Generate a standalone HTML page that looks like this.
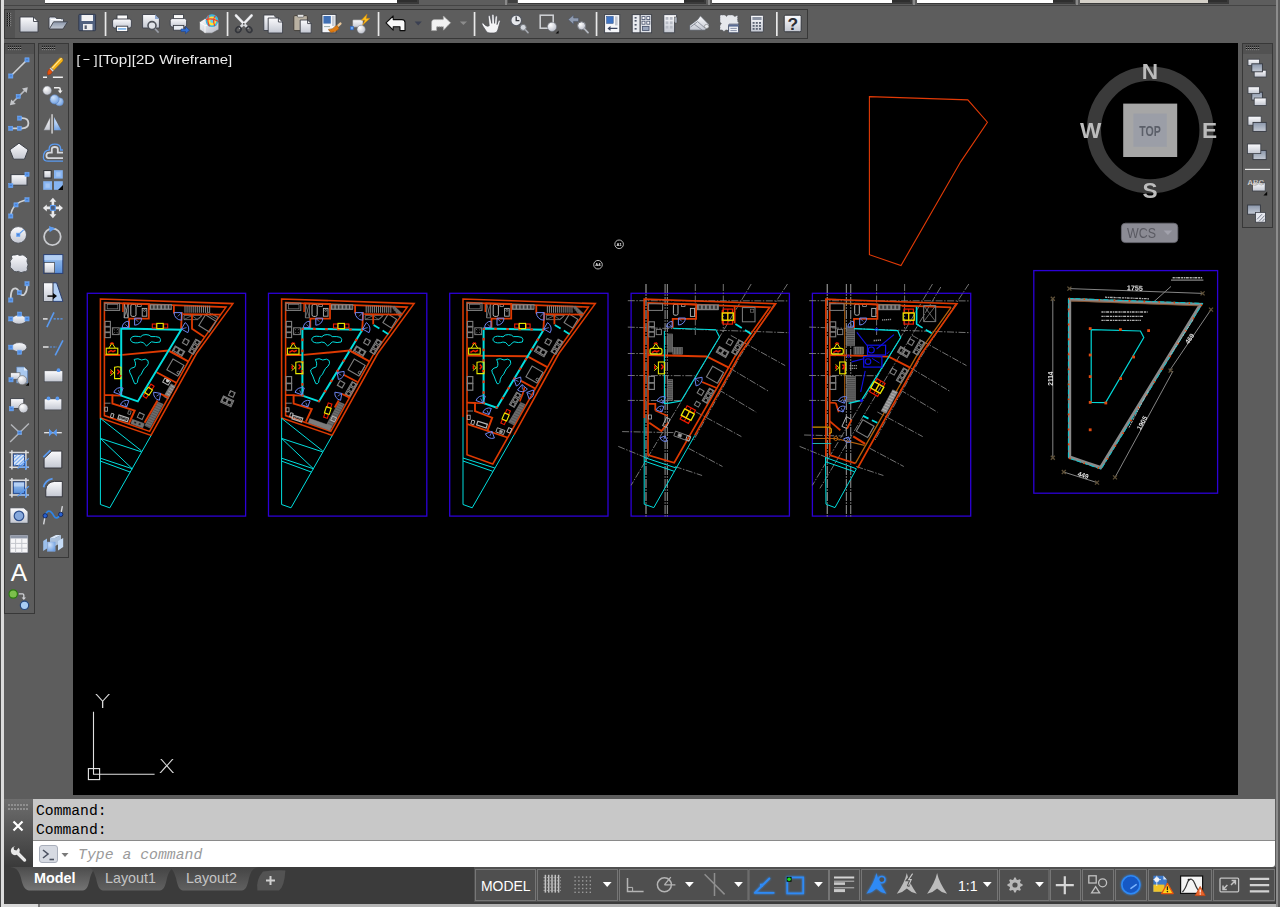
<!DOCTYPE html><html><head><meta charset="utf-8"><title>Drawing</title><style>
*{box-sizing:border-box;margin:0;padding:0}
html,body{width:1280px;height:907px;overflow:hidden;background:#5d5d5d;font-family:"Liberation Sans",sans-serif}
#root{position:relative;width:1280px;height:907px;overflow:hidden;background:#5d5d5d}
.abs{position:absolute}
.tb{position:absolute;border:1px solid #383838;background:#5d5d5d}
.grip{position:absolute;background:#525252}
svg{position:absolute;overflow:visible}
.mono{font-family:"Liberation Mono",monospace}
</style></head><body><div id="root">
<div class="abs" style="left:0;top:0;width:1px;height:907px;background:#4c4c4c"></div>
<div class="abs" style="left:1px;top:0;width:3px;height:907px;background:#dcdcdc"></div>
<div class="abs" style="left:1276px;top:0;width:2px;height:907px;background:#8c8c8c"></div>
<div class="abs" style="left:4px;top:5px;width:1272px;height:1px;background:#444"></div>
<div class="abs" style="left:45px;top:0;width:374px;height:4px;background:#3a3a3a"></div>
<div class="abs" style="left:45px;top:0;width:352px;height:3px;background:#fff"></div>
<div class="abs" style="left:397px;top:0;width:20px;height:2px;background:#2e2e2e"></div>
<div class="abs" style="left:518px;top:0;width:188px;height:4px;background:#3a3a3a"></div>
<div class="abs" style="left:518px;top:0;width:166px;height:3px;background:#fff"></div>
<div class="abs" style="left:684px;top:0;width:20px;height:2px;background:#2e2e2e"></div>
<div class="abs" style="left:712px;top:0;width:200px;height:4px;background:#3a3a3a"></div>
<div class="abs" style="left:712px;top:0;width:180px;height:3px;background:#fff"></div>
<div class="abs" style="left:892px;top:0;width:18px;height:2px;background:#2e2e2e"></div>
<div class="abs" style="left:917px;top:0;width:158px;height:4px;background:#3a3a3a"></div>
<div class="abs" style="left:917px;top:0;width:136px;height:3px;background:#fff"></div>
<div class="abs" style="left:1053px;top:0;width:20px;height:2px;background:#2e2e2e"></div>
<div class="abs" style="left:1080px;top:0;width:149px;height:4px;background:#3a3a3a"></div>
<div class="abs" style="left:1080px;top:0;width:128px;height:3px;background:#d4d0c8"></div>
<div class="abs" style="left:1208px;top:0;width:19px;height:2px;background:#2e2e2e"></div>
<div class="abs" style="left:505px;top:0;width:2px;height:5px;background:#8a8a8a"></div>
<div class="abs" style="left:508px;top:0;width:9px;height:3px;background:#404040"></div>
<div class="abs" style="left:708px;top:0;width:2px;height:5px;background:#8a8a8a"></div>
<div class="abs" style="left:913px;top:0;width:2px;height:5px;background:#8a8a8a"></div>
<div class="abs" style="left:1076px;top:0;width:2px;height:5px;background:#8a8a8a"></div>
<div class="tb" style="left:4px;top:9px;width:804px;height:30px"></div>
<div class="grip" style="left:5px;top:10px;width:10px;height:28px"></div>
<svg style="left:0;top:0" width="1280" height="43" viewBox="0 0 1280 43"><defs>
<linearGradient id="gw" x1="0" y1="0" x2="0" y2="1"><stop offset="0" stop-color="#fbfbfd"/><stop offset="1" stop-color="#c4c8d2"/></linearGradient>
<linearGradient id="gw2" x1="0" y1="0" x2="1" y2="1"><stop offset="0" stop-color="#ffffff"/><stop offset="1" stop-color="#b4b8c4"/></linearGradient>
<linearGradient id="gb" x1="0" y1="0" x2="0" y2="1"><stop offset="0" stop-color="#9ec4f0"/><stop offset="1" stop-color="#5a8fd8"/></linearGradient>
<linearGradient id="gg" x1="0" y1="0" x2="0" y2="1"><stop offset="0" stop-color="#e4e6ea"/><stop offset="1" stop-color="#8e949e"/></linearGradient>
<linearGradient id="gs" x1="0" y1="0" x2="0" y2="1"><stop offset="0" stop-color="#8a96aa"/><stop offset="1" stop-color="#c4cad4"/></linearGradient>
<radialGradient id="gsp" cx="0.35" cy="0.3" r="0.8"><stop offset="0" stop-color="#ffffff"/><stop offset="1" stop-color="#b8bcc8"/></radialGradient>
<radialGradient id="gbl" cx="0.35" cy="0.3" r="0.8"><stop offset="0" stop-color="#cfe2fa"/><stop offset="1" stop-color="#6a9ce0"/></radialGradient>
</defs><rect x="6.9" y="12.90" width="1" height="1.1" fill="#0c0c0c"/><rect x="7.95" y="12.90" width="1" height="1.1" fill="#8a8a8a"/><rect x="9.1" y="12.90" width="1" height="1.1" fill="#0c0c0c"/><rect x="10.15" y="12.90" width="1" height="1.1" fill="#8a8a8a"/><rect x="6.9" y="14.93" width="1" height="1.1" fill="#0c0c0c"/><rect x="7.95" y="14.93" width="1" height="1.1" fill="#8a8a8a"/><rect x="9.1" y="14.93" width="1" height="1.1" fill="#0c0c0c"/><rect x="10.15" y="14.93" width="1" height="1.1" fill="#8a8a8a"/><rect x="6.9" y="16.96" width="1" height="1.1" fill="#0c0c0c"/><rect x="7.95" y="16.96" width="1" height="1.1" fill="#8a8a8a"/><rect x="9.1" y="16.96" width="1" height="1.1" fill="#0c0c0c"/><rect x="10.15" y="16.96" width="1" height="1.1" fill="#8a8a8a"/><rect x="6.9" y="18.99" width="1" height="1.1" fill="#0c0c0c"/><rect x="7.95" y="18.99" width="1" height="1.1" fill="#8a8a8a"/><rect x="9.1" y="18.99" width="1" height="1.1" fill="#0c0c0c"/><rect x="10.15" y="18.99" width="1" height="1.1" fill="#8a8a8a"/><rect x="6.9" y="21.02" width="1" height="1.1" fill="#0c0c0c"/><rect x="7.95" y="21.02" width="1" height="1.1" fill="#8a8a8a"/><rect x="9.1" y="21.02" width="1" height="1.1" fill="#0c0c0c"/><rect x="10.15" y="21.02" width="1" height="1.1" fill="#8a8a8a"/><rect x="6.9" y="23.05" width="1" height="1.1" fill="#0c0c0c"/><rect x="7.95" y="23.05" width="1" height="1.1" fill="#8a8a8a"/><rect x="9.1" y="23.05" width="1" height="1.1" fill="#0c0c0c"/><rect x="10.15" y="23.05" width="1" height="1.1" fill="#8a8a8a"/><rect x="6.9" y="25.08" width="1" height="1.1" fill="#0c0c0c"/><rect x="7.95" y="25.08" width="1" height="1.1" fill="#8a8a8a"/><rect x="9.1" y="25.08" width="1" height="1.1" fill="#0c0c0c"/><rect x="10.15" y="25.08" width="1" height="1.1" fill="#8a8a8a"/><path d="M20 17H33.5L38 21.5V32H20Z" fill="url(#gw)" stroke="#3c4048" stroke-width="0.9"/><path d="M33.5 17V21.5H38Z" fill="#fff" stroke="#3c4048" stroke-width="0.9"/><path d="M49 29V18.3q0-1.3 1.3-1.3h5l1.6 1.8h5.6q1 0 1 1v2" fill="#e2e6ee" stroke="#3c4048" stroke-width="0.9"/><path d="M49.3 29L53.6 21.8H67.6L63 29Z" fill="url(#gs)" stroke="#3c4048" stroke-width="0.9"/><path d="M51 19.5h10" stroke="#fff" stroke-width="1"/><rect x="78.8" y="14.3" width="16.8" height="16.4" rx="1" fill="#50607e" stroke="#2e3648" stroke-width="0.9"/><rect x="81.5" y="15" width="11.5" height="6" fill="#f2f2f4"/><rect x="83" y="24" width="9.5" height="6.2" fill="#ececee"/><rect x="84.6" y="25.4" width="2.2" height="3.6" fill="#555e70"/><rect x="104.7" y="12" width="1.7" height="24" fill="#e9e9e9"/><rect x="117" y="15" width="10.5" height="5" fill="#fafafa" stroke="#3c4048" stroke-width="0.9"/><rect x="112.6" y="19" width="18.8" height="9" rx="2" fill="url(#gw)" stroke="#3c4048" stroke-width="0.9"/><rect x="116.5" y="26.2" width="11.2" height="5.4" fill="#fdfdfd" stroke="#3c4048" stroke-width="0.9"/><rect x="118" y="28" width="8.2" height="1.8" fill="#86b8ea"/><path d="M142.6 14.5H155L159.4 19V28H142.6Z" fill="url(#gw)" stroke="#3c4048" stroke-width="0.9"/><path d="M155 14.5V19H159.4Z" fill="#8fa8d0"/><circle cx="152" cy="25.6" r="4" fill="#dfe2e8" stroke="#50545c" stroke-width="1.6"/><path d="M155 28.8L158.6 32.6" stroke="#9a9ea8" stroke-width="1.6"/><rect x="173.5" y="14.6" width="10" height="5" fill="#fafafa" stroke="#3c4048" stroke-width="0.9"/><rect x="170.2" y="18.6" width="16.4" height="8.4" rx="2" fill="url(#gw)" stroke="#3c4048" stroke-width="0.9"/><rect x="173.4" y="25.4" width="10.4" height="4.8" fill="#e8ecf2" stroke="#3c4048" stroke-width="0.9"/><path d="M181 29h4.5v-2.4l4 3.6l-4 3.6v-2.4H181Z" fill="#2f6fd6" stroke="#1c3f8a" stroke-width="0.6"/><path d="M199.6 22L205 18.5H214L218.8 22.5V29.5L212 33.2H205L199.6 29.5Z" fill="url(#gw2)" stroke="#555" stroke-width="0.6"/><path d="M205 25.5V33M205 25.5L199.8 22.3M205 25.5H215" stroke="#fff" stroke-width="0.8" fill="none"/><circle cx="212" cy="20.6" r="6.4" fill="#3fb6e0"/><circle cx="212" cy="21" r="4.4" fill="#ffe23a"/><circle cx="212.4" cy="20.8" r="2.2" fill="#5fd0f0"/><path d="M208.4 15.4Q207 21 209.4 26.2M206 19.6Q212 17.6 218 21.2M215.6 15.6Q212 19 214.8 26" stroke="#f0402a" stroke-width="1.1" fill="none"/><rect x="226.7" y="12" width="1.7" height="24" fill="#e9e9e9"/><path d="M236 15.5L247.6 27.6M251.6 15.5L240 27.6" stroke="#d8dade" stroke-width="2.6" stroke-linecap="round"/><path d="M236 15.5L243.8 23.8M251.6 15.5L243.8 23.8" stroke="#f4f4f6" stroke-width="1.4" stroke-linecap="round"/><ellipse cx="238.4" cy="29.6" rx="2.4" ry="3" transform="rotate(40 238.4 29.6)" fill="none" stroke="#34363c" stroke-width="1.6"/><ellipse cx="249.2" cy="29.6" rx="2.4" ry="3" transform="rotate(-40 249.2 29.6)" fill="none" stroke="#34363c" stroke-width="1.6"/><circle cx="243.8" cy="23.8" r="0.9" fill="#444"/><path d="M263.8 15H273.5L277.6 19V30.5H263.8Z" fill="url(#gw)" stroke="#3c4048" stroke-width="0.9"/><path d="M268.2 18H278.4L282.6 22V33H268.2Z" fill="url(#gw)" stroke="#3c4048" stroke-width="0.9"/><path d="M278.4 18V22H282.6Z" fill="#fff" stroke="#3c4048" stroke-width="0.9"/><rect x="293.8" y="15.6" width="13.6" height="15" rx="1.2" fill="#b9b1a2" stroke="#3e3a34" stroke-width="0.9"/><rect x="297.4" y="14.4" width="6.4" height="2.8" rx="1" fill="#e6e6e6" stroke="#444" stroke-width="0.6"/><path d="M300.2 20H307.6L311.2 23.6V33H300.2Z" fill="url(#gw)" stroke="#3c4048" stroke-width="0.9"/><path d="M307.6 20V23.6H311.2Z" fill="#fff" stroke="#3c4048" stroke-width="0.9"/><rect x="322" y="14.4" width="14" height="18.4" fill="#f4f6fa" stroke="#3c4048" stroke-width="0.9"/><rect x="323.4" y="16" width="7.4" height="7.6" fill="#3f6fb4"/><rect x="332" y="16" width="2.6" height="10" fill="#c8ccd4"/><path d="M324 26.6h6" stroke="#9aa" stroke-width="1"/><path d="M340.4 23.6L336.6 27.2" stroke="#e9c79a" stroke-width="2.4" stroke-linecap="round"/><path d="M337.2 25.4L339 28.6Q336 32.6 331 32.4Q328.6 30.6 328.4 29.4Q333 29.4 335 26.4Z" fill="#e07c12" stroke="#8a4a08" stroke-width="0.5"/><rect x="352.6" y="19.8" width="10.4" height="7.4" rx="1" fill="url(#gw)" stroke="#666" stroke-width="0.5"/><circle cx="361.2" cy="29.4" r="4.2" fill="url(#gsp)" stroke="#70747c" stroke-width="0.5"/><rect x="350.4" y="26.6" width="3" height="3.2" fill="#6aa8f4" stroke="#2c62c0" stroke-width="0.6"/><path d="M367 14.2L361.4 20.2H365L362.6 25L369.8 18.4H366Z" fill="#ffc21c" stroke="#e08a00" stroke-width="0.5"/><rect x="377.7" y="12" width="1.7" height="24" fill="#e9e9e9"/><path d="M386 22.8L393.2 16V19.6H402Q405 19.6 405 22.6V30.6H400V26.8H393.2V30.2Z" fill="#fafafa" stroke="#0c0c0c" stroke-width="1.1" stroke-linejoin="round"/><path d="M414.6 21.4h7.2l-3.6 4z" fill="#3b4052"/><path d="M450.6 22.8L443.4 16V19.6H434.6Q431.6 19.6 431.6 22.6V30.6H436.6V26.8H443.4V30.2Z" fill="#f2f2f2" stroke="#a6a6a6" stroke-width="1" stroke-dasharray="1.2 0.8" stroke-linejoin="round"/><path d="M459.8 21.4h7.2l-3.6 3.6z" fill="#8c8c8c"/><rect x="473.7" y="12" width="1.7" height="24" fill="#e9e9e9"/><path d="M485.2 25.2Q483 22.4 482 22.8Q481.2 23.6 482.8 26L486.4 31.4Q487.6 33 490 33H494Q497 33 497.8 30L500.2 21.6Q500.4 20.2 499.4 20.2Q498.6 20.2 498.2 21.4L497 24.6L497.4 17Q497.4 15.8 496.4 15.8Q495.4 15.8 495.2 17L494.6 23.4L494 15.4Q493.8 14.2 492.8 14.2Q491.8 14.2 491.8 15.4L491.8 23.4L490.2 16.4Q490 15.2 489 15.4Q488 15.6 488.2 16.8L489.2 25.8Q487.6 27 485.2 25.2Z" fill="#f4f4f6" stroke="#4a4c52" stroke-width="0.7"/><circle cx="516.2" cy="20.4" r="5.4" fill="#e6e8ec" stroke="#565a62" stroke-width="1.3"/><path d="M516.2 16.6V20.6H519.4" stroke="#33363c" stroke-width="1.3" fill="none"/><circle cx="523.2" cy="27.4" r="3" fill="#d4d8de" stroke="#74787f" stroke-width="1"/><path d="M525.4 29.8L528 32.6" stroke="#a4a8b0" stroke-width="1.6" stroke-linecap="round"/><rect x="540.2" y="15.2" width="13" height="13" fill="none" stroke="#d2d4d8" stroke-width="1.5"/><circle cx="552" cy="26.8" r="4.6" fill="url(#gsp)" stroke="#6c7078" stroke-width="0.6"/><path d="M558.6 30.6V33.6H555.6Z" fill="#0a0a0a"/><path d="M568.2 19.6L573.6 15V18H578.6V21.4H573.6V24.4Z" fill="#8f9bb0" stroke="#4c5464" stroke-width="0.6"/><circle cx="581.6" cy="25.8" r="4" fill="url(#gsp)" stroke="#767a82" stroke-width="1"/><path d="M584.6 29L588 32.6" stroke="#b4b8c0" stroke-width="1.8" stroke-linecap="round"/><rect x="595.7" y="12" width="1.7" height="24" fill="#e9e9e9"/><rect x="604.6" y="14.6" width="15.2" height="18.2" fill="#f6f7fa" stroke="#3c4048" stroke-width="0.9"/><rect x="606.6" y="16.4" width="6.6" height="7" fill="#3f74c4" stroke="#27467c" stroke-width="0.5"/><rect x="615" y="16.4" width="2.6" height="9" fill="#c2c6d0"/><path d="M617.4 28.4H608.6M610.6 26.6L608.4 28.4L610.6 30.2" stroke="#3a4460" stroke-width="1.2" fill="none"/><rect x="632.2" y="14.6" width="8" height="18.2" fill="#e9ebf0" stroke="#3c4048" stroke-width="0.9"/><rect x="640.2" y="14.6" width="11.4" height="18.2" fill="#dfe2e8" stroke="#3c4048" stroke-width="0.9"/><rect x="634.6" y="17" width="2" height="1.6" fill="#50586a"/><rect x="634.6" y="20" width="2" height="1.6" fill="#50586a"/><rect x="634.6" y="24" width="2" height="1.6" fill="#50586a"/><rect x="634.6" y="28" width="2" height="1.6" fill="#50586a"/><rect x="642" y="16.6" width="3" height="3" fill="#f8f8fa" stroke="#46506a" stroke-width="0.8"/><rect x="646.8" y="16.6" width="3" height="3" fill="#f8f8fa" stroke="#46506a" stroke-width="0.8"/><rect x="642" y="21.2" width="3" height="3" fill="#f8f8fa" stroke="#46506a" stroke-width="0.8"/><rect x="646.8" y="21.2" width="3" height="3" fill="#f8f8fa" stroke="#46506a" stroke-width="0.8"/><rect x="642.6" y="26.4" width="6.4" height="4.2" fill="#9aa6bc" stroke="#46506a" stroke-width="0.8"/><path d="M663.8 14.6H676.6V22H674.6V32.8H663.8Z" fill="url(#gw)" stroke="#3c4048" stroke-width="0.9"/><rect x="674.6" y="17" width="2.4" height="6" fill="#a8aeba" stroke="#444" stroke-width="0.5"/><rect x="665.6" y="17" width="2.8" height="2.8" fill="#b8bcc6"/><rect x="669.8" y="17" width="2.8" height="2.8" fill="#b8bcc6"/><rect x="665.6" y="21.4" width="2.8" height="2.8" fill="#b8bcc6"/><rect x="669.8" y="21.4" width="2.8" height="2.8" fill="#b8bcc6"/><rect x="665.6" y="25.8" width="2.8" height="2.8" fill="#b8bcc6"/><rect x="669.8" y="25.8" width="2.8" height="2.8" fill="#b8bcc6"/><path d="M689.6 25.4L697.6 19.6L700.4 15.8L709 24.6Q709.6 28 706.6 28.6L705 30.2H689.6Z" fill="url(#gw)" stroke="#50545c" stroke-width="0.7"/><path d="M690.6 27L697.6 21.6L705.4 28.4M694 24L702 30" stroke="#7c828e" stroke-width="0.8" fill="none"/><ellipse cx="706.6" cy="26.4" rx="2.2" ry="2" fill="#e8eaee" stroke="#666" stroke-width="0.5"/><path d="M720 15H725L726.4 16.4L728 15H733L734.4 16.6L737.6 15.4V21L738.6 23L737.6 25V30H733L731.6 31.4L730 30H725.6L724 31.6L722.4 30H720V25.4L721.4 23.6L720 22Z" fill="#e6e8ec" stroke="#5a5e68" stroke-width="0.6" stroke-dasharray="1.4 0.7"/><rect x="728.6" y="24.2" width="10" height="8.6" rx="1" fill="#f0f2f6" stroke="#3c4660" stroke-width="0.9"/><rect x="729" y="24.6" width="9.2" height="2" fill="#5a6c94"/><path d="M730.4 28.4h6.4M730.4 30.6h6.4" stroke="#7c86a0" stroke-width="0.9"/><rect x="750.6" y="15.2" width="12.8" height="16.8" rx="1" fill="url(#gw)" stroke="#3c4048" stroke-width="0.9"/><rect x="752.4" y="17" width="9.2" height="3" fill="#8c94a4"/><rect x="752.6" y="22" width="2" height="1.8" fill="#5c6474"/><rect x="755.8" y="22" width="2" height="1.8" fill="#5c6474"/><rect x="759" y="22" width="2" height="1.8" fill="#5c6474"/><rect x="752.6" y="25" width="2" height="1.8" fill="#5c6474"/><rect x="755.8" y="25" width="2" height="1.8" fill="#5c6474"/><rect x="759" y="25" width="2" height="1.8" fill="#5c6474"/><rect x="752.6" y="28" width="2" height="1.8" fill="#5c6474"/><rect x="755.8" y="28" width="2" height="1.8" fill="#5c6474"/><rect x="759" y="28" width="2" height="1.8" fill="#5c6474"/><rect x="776.0" y="12" width="1.7" height="24" fill="#e9e9e9"/><rect x="784.2" y="15.2" width="17" height="16.6" rx="1.5" fill="url(#gw)" stroke="#33363c" stroke-width="1"/><text x="792.8" y="29.8" font-family="Liberation Sans,sans-serif" font-weight="bold" font-size="17.4" text-anchor="middle" fill="#2c2e34">?</text></svg>
<div class="tb" style="left:4px;top:43px;width:31px;height:571px"></div>
<div class="grip" style="left:5px;top:44px;width:29px;height:10px"></div>
<div class="tb" style="left:38px;top:43px;width:31px;height:515px"></div>
<div class="grip" style="left:39px;top:44px;width:29px;height:10px"></div>
<svg style="left:0;top:43px" width="73" height="580" viewBox="0 43 73 580"><rect x="7.95" y="45.8" width="1.05" height="1.05" fill="#0c0c0c"/><rect x="7.95" y="46.9" width="1.05" height="1.05" fill="#8c8c8c"/><rect x="7.95" y="48.0" width="1.05" height="1.05" fill="#0c0c0c"/><rect x="7.95" y="49.1" width="1.05" height="1.05" fill="#8c8c8c"/><rect x="9.97" y="45.8" width="1.05" height="1.05" fill="#0c0c0c"/><rect x="9.97" y="46.9" width="1.05" height="1.05" fill="#8c8c8c"/><rect x="9.97" y="48.0" width="1.05" height="1.05" fill="#0c0c0c"/><rect x="9.97" y="49.1" width="1.05" height="1.05" fill="#8c8c8c"/><rect x="11.99" y="45.8" width="1.05" height="1.05" fill="#0c0c0c"/><rect x="11.99" y="46.9" width="1.05" height="1.05" fill="#8c8c8c"/><rect x="11.99" y="48.0" width="1.05" height="1.05" fill="#0c0c0c"/><rect x="11.99" y="49.1" width="1.05" height="1.05" fill="#8c8c8c"/><rect x="14.01" y="45.8" width="1.05" height="1.05" fill="#0c0c0c"/><rect x="14.01" y="46.9" width="1.05" height="1.05" fill="#8c8c8c"/><rect x="14.01" y="48.0" width="1.05" height="1.05" fill="#0c0c0c"/><rect x="14.01" y="49.1" width="1.05" height="1.05" fill="#8c8c8c"/><rect x="16.03" y="45.8" width="1.05" height="1.05" fill="#0c0c0c"/><rect x="16.03" y="46.9" width="1.05" height="1.05" fill="#8c8c8c"/><rect x="16.03" y="48.0" width="1.05" height="1.05" fill="#0c0c0c"/><rect x="16.03" y="49.1" width="1.05" height="1.05" fill="#8c8c8c"/><rect x="18.05" y="45.8" width="1.05" height="1.05" fill="#0c0c0c"/><rect x="18.05" y="46.9" width="1.05" height="1.05" fill="#8c8c8c"/><rect x="18.05" y="48.0" width="1.05" height="1.05" fill="#0c0c0c"/><rect x="18.05" y="49.1" width="1.05" height="1.05" fill="#8c8c8c"/><rect x="20.07" y="45.8" width="1.05" height="1.05" fill="#0c0c0c"/><rect x="20.07" y="46.9" width="1.05" height="1.05" fill="#8c8c8c"/><rect x="20.07" y="48.0" width="1.05" height="1.05" fill="#0c0c0c"/><rect x="20.07" y="49.1" width="1.05" height="1.05" fill="#8c8c8c"/><rect x="41.95" y="45.8" width="1.05" height="1.05" fill="#0c0c0c"/><rect x="41.95" y="46.9" width="1.05" height="1.05" fill="#8c8c8c"/><rect x="41.95" y="48.0" width="1.05" height="1.05" fill="#0c0c0c"/><rect x="41.95" y="49.1" width="1.05" height="1.05" fill="#8c8c8c"/><rect x="43.97" y="45.8" width="1.05" height="1.05" fill="#0c0c0c"/><rect x="43.97" y="46.9" width="1.05" height="1.05" fill="#8c8c8c"/><rect x="43.97" y="48.0" width="1.05" height="1.05" fill="#0c0c0c"/><rect x="43.97" y="49.1" width="1.05" height="1.05" fill="#8c8c8c"/><rect x="45.99" y="45.8" width="1.05" height="1.05" fill="#0c0c0c"/><rect x="45.99" y="46.9" width="1.05" height="1.05" fill="#8c8c8c"/><rect x="45.99" y="48.0" width="1.05" height="1.05" fill="#0c0c0c"/><rect x="45.99" y="49.1" width="1.05" height="1.05" fill="#8c8c8c"/><rect x="48.01" y="45.8" width="1.05" height="1.05" fill="#0c0c0c"/><rect x="48.01" y="46.9" width="1.05" height="1.05" fill="#8c8c8c"/><rect x="48.01" y="48.0" width="1.05" height="1.05" fill="#0c0c0c"/><rect x="48.01" y="49.1" width="1.05" height="1.05" fill="#8c8c8c"/><rect x="50.03" y="45.8" width="1.05" height="1.05" fill="#0c0c0c"/><rect x="50.03" y="46.9" width="1.05" height="1.05" fill="#8c8c8c"/><rect x="50.03" y="48.0" width="1.05" height="1.05" fill="#0c0c0c"/><rect x="50.03" y="49.1" width="1.05" height="1.05" fill="#8c8c8c"/><rect x="52.05" y="45.8" width="1.05" height="1.05" fill="#0c0c0c"/><rect x="52.05" y="46.9" width="1.05" height="1.05" fill="#8c8c8c"/><rect x="52.05" y="48.0" width="1.05" height="1.05" fill="#0c0c0c"/><rect x="52.05" y="49.1" width="1.05" height="1.05" fill="#8c8c8c"/><rect x="54.07" y="45.8" width="1.05" height="1.05" fill="#0c0c0c"/><rect x="54.07" y="46.9" width="1.05" height="1.05" fill="#8c8c8c"/><rect x="54.07" y="48.0" width="1.05" height="1.05" fill="#0c0c0c"/><rect x="54.07" y="49.1" width="1.05" height="1.05" fill="#8c8c8c"/><path d="M10.8 76L27 59.9" stroke="#cfd1d4" stroke-width="1.5"/><rect x="24.9" y="57.8" width="4.2" height="4.2" fill="#5b9af0" stroke="#74acf8" stroke-width="0.5"/><rect x="25.9" y="59.2" width="2.2" height="1.1" fill="#4a7cc8"/><rect x="8.7" y="73.9" width="4.2" height="4.2" fill="#5b9af0" stroke="#74acf8" stroke-width="0.5"/><rect x="9.7" y="75.3" width="2.2" height="1.1" fill="#4a7cc8"/><path d="M12 103L25.8 89.4" stroke="#b9bbbf" stroke-width="1.5"/><path d="M27.8 87.2L22 88.4L26.6 93Z" fill="#c4c6ca"/><path d="M9.9 105.2L11.2 99.4L15.8 104Z" fill="#c4c6ca"/><rect x="16.1" y="94.3" width="4.2" height="4.2" fill="#5b9af0" stroke="#74acf8" stroke-width="0.5"/><rect x="17.1" y="95.7" width="2.2" height="1.1" fill="#4a7cc8"/><path d="M10.7 128.3H22.4Q28.4 128 28.4 123.2Q28.4 118.2 22.4 118.1H19.6" stroke="#cfd1d4" stroke-width="1.8" fill="none"/><rect x="17.5" y="116.0" width="4.2" height="4.2" fill="#5b9af0" stroke="#74acf8" stroke-width="0.5"/><rect x="18.5" y="117.4" width="2.2" height="1.1" fill="#4a7cc8"/><rect x="8.6" y="126.2" width="4.2" height="4.2" fill="#5b9af0" stroke="#74acf8" stroke-width="0.5"/><rect x="9.6" y="127.6" width="2.2" height="1.1" fill="#4a7cc8"/><rect x="17.2" y="126.2" width="4.2" height="4.2" fill="#5b9af0" stroke="#74acf8" stroke-width="0.5"/><rect x="18.2" y="127.6" width="2.2" height="1.1" fill="#4a7cc8"/><path d="M19 143.2L28.1 149.8L24.5 159.2H13.5L9.9 149.8Z" fill="url(#gw)" stroke="#3c4048" stroke-width="1"/><rect x="11" y="174.6" width="16" height="10.6" fill="url(#gw)" stroke="#3c4048" stroke-width="1"/><rect x="24.9" y="172.2" width="4.2" height="4.2" fill="#5b9af0" stroke="#74acf8" stroke-width="0.5"/><rect x="25.9" y="173.6" width="2.2" height="1.1" fill="#4a7cc8"/><rect x="8.7" y="183.5" width="4.2" height="4.2" fill="#5b9af0" stroke="#74acf8" stroke-width="0.5"/><rect x="9.7" y="184.9" width="2.2" height="1.1" fill="#4a7cc8"/><path d="M10.8 216Q11.6 203 27 199.8" stroke="#cfd1d4" stroke-width="1.6" fill="none"/><rect x="24.9" y="197.7" width="4.2" height="4.2" fill="#5b9af0" stroke="#74acf8" stroke-width="0.5"/><rect x="25.9" y="199.1" width="2.2" height="1.1" fill="#4a7cc8"/><rect x="13.9" y="202.8" width="4.2" height="4.2" fill="#5b9af0" stroke="#74acf8" stroke-width="0.5"/><rect x="14.9" y="204.2" width="2.2" height="1.1" fill="#4a7cc8"/><rect x="8.7" y="213.9" width="4.2" height="4.2" fill="#5b9af0" stroke="#74acf8" stroke-width="0.5"/><rect x="9.7" y="215.3" width="2.2" height="1.1" fill="#4a7cc8"/><circle cx="18.2" cy="234.9" r="8.3" fill="url(#gw)" stroke="#4a4e56" stroke-width="0.8"/><path d="M18.2 234.9L23.9 229.6" stroke="#5a9af0" stroke-width="1.2"/><rect x="16.4" y="233.1" width="3.6" height="3.6" fill="#5b9af0" stroke="#74acf8" stroke-width="0.5"/><rect x="17.1" y="234.2" width="2.2" height="1.1" fill="#4a7cc8"/><path d="M12 258.6Q10 254.4 15 255Q17.4 253.6 19.6 255.4Q23.4 253.6 25.6 256.6Q28.6 258 27 261.4Q29 265 27.2 267.6Q28.4 272 23.8 271.8Q21 273.8 18.4 271.4Q14 272.8 12.6 269.4Q8.6 267.8 10.6 264.2Q8.8 261 12 258.6Z" fill="url(#gw)" stroke="#44484f" stroke-width="0.9"/><path d="M10.8 300Q10.4 288 15.6 288.4Q18 288.8 19.3 292.6Q21.4 296.4 24.4 294.4Q27.4 291.6 27 283.8" stroke="#cfd1d4" stroke-width="1.8" fill="none"/><rect x="24.9" y="281.7" width="4.2" height="4.2" fill="#5b9af0" stroke="#74acf8" stroke-width="0.5"/><rect x="25.9" y="283.1" width="2.2" height="1.1" fill="#4a7cc8"/><rect x="17.2" y="290.5" width="4.2" height="4.2" fill="#5b9af0" stroke="#74acf8" stroke-width="0.5"/><rect x="18.2" y="291.9" width="2.2" height="1.1" fill="#4a7cc8"/><rect x="8.7" y="297.9" width="4.2" height="4.2" fill="#5b9af0" stroke="#74acf8" stroke-width="0.5"/><rect x="9.7" y="299.3" width="2.2" height="1.1" fill="#4a7cc8"/><ellipse cx="19" cy="319.6" rx="7.4" ry="4.5" fill="url(#gw)" stroke="#4a4e56" stroke-width="0.7"/><rect x="17.5" y="312.0" width="4.2" height="4.2" fill="#5b9af0" stroke="#74acf8" stroke-width="0.5"/><rect x="18.5" y="313.4" width="2.2" height="1.1" fill="#4a7cc8"/><rect x="8.7" y="316.8" width="4.2" height="4.2" fill="#5b9af0" stroke="#74acf8" stroke-width="0.5"/><rect x="9.7" y="318.2" width="2.2" height="1.1" fill="#4a7cc8"/><rect x="24.9" y="316.8" width="4.2" height="4.2" fill="#5b9af0" stroke="#74acf8" stroke-width="0.5"/><rect x="25.9" y="318.2" width="2.2" height="1.1" fill="#4a7cc8"/><ellipse cx="19.2" cy="347.2" rx="7.6" ry="4.6" fill="url(#gw)" stroke="#4a4e56" stroke-width="0.7"/><rect x="8.7" y="345.1" width="4.2" height="4.2" fill="#5b9af0" stroke="#74acf8" stroke-width="0.5"/><rect x="9.7" y="346.5" width="2.2" height="1.1" fill="#4a7cc8"/><rect x="17.5" y="350.1" width="4.2" height="4.2" fill="#5b9af0" stroke="#74acf8" stroke-width="0.5"/><rect x="18.5" y="351.5" width="2.2" height="1.1" fill="#4a7cc8"/><path d="M16.6 367H24L27.6 370.6V383H16.6Z" fill="#a9c8ee" stroke="#5a7eb0" stroke-width="0.7"/><path d="M24 367V370.6H27.6Z" fill="#e4eefa"/><rect x="10.6" y="372.8" width="9.4" height="6.4" fill="url(#gw)" stroke="#555" stroke-width="0.6"/><circle cx="22.2" cy="380.2" r="4.6" fill="url(#gsp)" stroke="#666" stroke-width="0.6"/><rect x="8.9" y="377.7" width="4.2" height="4.2" fill="#5b9af0" stroke="#74acf8" stroke-width="0.5"/><rect x="9.9" y="379.1" width="2.2" height="1.1" fill="#4a7cc8"/><path d="M29 382.4V385.8H25.6Z" fill="#0a0a0a"/><rect x="10.6" y="398.6" width="13.2" height="9.8" fill="url(#gw)" stroke="#3c4048" stroke-width="0.9"/><circle cx="23.4" cy="408.2" r="4.7" fill="url(#gsp)" stroke="#555" stroke-width="0.7"/><rect x="9.3" y="406.7" width="4.2" height="4.2" fill="#5b9af0" stroke="#74acf8" stroke-width="0.5"/><rect x="10.3" y="408.1" width="2.2" height="1.1" fill="#4a7cc8"/><path d="M11 424.4L21.6 434.6M28.9 423.5L10.1 442" stroke="#b4b6ba" stroke-width="1.4"/><rect x="17.8" y="430.9" width="3.6" height="3.6" fill="#5b9af0" stroke="#74acf8" stroke-width="0.5"/><rect x="18.5" y="432.0" width="2.2" height="1.1" fill="#4a7cc8"/><path d="M9.4 452.5H28.9M9.4 467.2H28.9M11.9 450.3V469.6M25.9 450.3V469.6" stroke="#dcdde0" stroke-width="1.5"/><rect x="13.5" y="454.2" width="11" height="11.4" fill="#dfe9f8" stroke="#2c4f94" stroke-width="1"/><path d="M14 458L17.6 454.6M14 462L21.6 454.6M14.4 465.4L24.2 456M18.4 465.4L24.2 460M22 465.4L24.2 463.4" stroke="#7fb0f0" stroke-width="1.3"/><path d="M17.6 468.6L28.8 458.4M19 467.2H28.6M25.6 462V470" stroke="#5a9af0" stroke-width="1.2" fill="none"/><path d="M9.4 480.3H28.9M9.4 495.0H28.9M11.9 478.1V497.40000000000003M25.9 478.1V497.40000000000003" stroke="#dcdde0" stroke-width="1.5"/><rect x="13.5" y="482" width="11" height="11.4" fill="url(#gb)" stroke="#2c4f94" stroke-width="1"/><path d="M13.8 482.4h10.4v4h-10.4z" fill="#c4daf8" opacity="0.7"/><path d="M17.6 496.4L28.8 486.2M19 495H28.6M25.6 489.8V497.8" stroke="#5a9af0" stroke-width="1.2" fill="none"/><path d="M9.9 507.8H24L28.1 511.6V523.3H9.9Z" fill="url(#gw)" stroke="#44484f" stroke-width="0.9"/><circle cx="19" cy="515.9" r="4.8" fill="#86a8dc" stroke="#2f4f8c" stroke-width="1.2"/><rect x="9.9" y="535" width="18.2" height="18" fill="#f6f6f8" stroke="#50545c" stroke-width="0.8"/><rect x="10.3" y="535.4" width="17.4" height="3" fill="#8e96a6"/><path d="M10 543.4H28M10 548.2H28M15.6 538.4V553M21.8 538.4V553" stroke="#c4c6cc" stroke-width="1"/><text x="19" y="580.6" font-family="Liberation Sans,sans-serif" font-size="24.6" text-anchor="middle" fill="#fcfcfc">A</text><circle cx="13.2" cy="594" r="4.2" fill="#7cc04c" stroke="#2a7a10" stroke-width="1.2"/><circle cx="24.5" cy="605.3" r="4.2" fill="#a8ccf4" stroke="#24467c" stroke-width="1.2"/><path d="M18.8 593.8H22.6Q23.8 593.8 23.8 595V598.6" stroke="#d0d2d6" stroke-width="1.3" fill="none"/><path d="M21.6 597.4h4.4l-2.2 2.6z" fill="#d0d2d6"/><path d="M62.9 58.5L60 57.6L50.8 67.4L53.8 70.6L63 61Z" fill="#f2b21a" stroke="#8a5c08" stroke-width="0.5"/><path d="M61.6 58L52 68.4" stroke="#fde9a0" stroke-width="1.1"/><path d="M50.8 67.4L53.8 70.6L52.4 72L49.4 68.8Z" fill="#d8dade" stroke="#666" stroke-width="0.4"/><path d="M49.4 68.8L52.4 72Q50.8 75.4 47.8 75Q46.4 72 49.4 68.8Z" fill="#e8530e" stroke="#8a2c04" stroke-width="0.4"/><path d="M43 77.3H47M52.9 77.3H62.9" stroke="#f0f0f0" stroke-width="1.4"/><circle cx="47.2" cy="90.5" r="4.4" fill="url(#gsp)" stroke="#70747c" stroke-width="0.5"/><circle cx="59.4" cy="101.8" r="4" fill="url(#gbl)" stroke="#6a90c8" stroke-width="0.5"/><circle cx="54.6" cy="99.4" r="4.6" fill="url(#gbl)" stroke="#5a82c0" stroke-width="0.6"/><path d="M54 87.8H58.8Q60.2 87.8 60.2 89.2V91.4" stroke="#f0f0f0" stroke-width="1.5" fill="none"/><path d="M57.8 90.6h4.8l-2.4 2.8z" fill="#f0f0f0"/><path d="M43.6 130.2L50.2 117V130.2Z" fill="url(#gw)" stroke="#555" stroke-width="0.4"/><path d="M54 117V130.2H61.2Z" fill="url(#gbl)"/><path d="M52.1 114.2V133.5" stroke="#e4e4e6" stroke-width="1.6"/><path d="M52.1 114.2V133.5" stroke="#666" stroke-width="0.4"/><path d="M63 161.2H48.4Q43.4 161 43.4 157.4Q43.4 150.4 49.2 150V148.4Q49.4 144.2 54.8 144.2Q60.4 144.2 60.6 148.4V150H63" stroke="#5a9af0" stroke-width="1.3" fill="none"/><path d="M63 158.2H48.4Q46.4 158 46.4 155.6Q46.4 152.8 49.4 152.6H51.8V149Q51.8 147 54.8 147Q57.8 147 57.8 149V152.6H63" stroke="#d6d8dc" stroke-width="1.8" fill="none"/><rect x="43.8" y="170.6" width="7.4" height="7.4" fill="url(#gw)" stroke="#2c2e34" stroke-width="1"/><rect x="54" y="170.2" width="8.8" height="8.4" fill="#86b4f2"/><rect x="56.2" y="172.2" width="4.4" height="4.4" fill="#a4c6f4"/><rect x="43.2" y="181.2" width="8.8" height="8.6" fill="#86b4f2"/><rect x="45.4" y="183.4" width="4.4" height="4.4" fill="#a4c6f4"/><rect x="54" y="181.2" width="8.8" height="8.6" fill="#86b4f2"/><path d="M63 185V190H58Z" fill="#060606"/><path d="M52.9 197.8L56.4 201.8H54.2V206.6H59V204.4L63 207.9L59 211.4V209.2H54.2V214.2H56.4L52.9 218.2L49.4 214.2H51.6V209.2H46.8V211.4L42.9 207.9L46.8 204.4V206.6H51.6V201.8H49.4Z" fill="#e9e9eb"/><rect x="50.5" y="205.5" width="4.8" height="4.8" fill="#4a5a78" stroke="#5a9af0" stroke-width="1.1"/><circle cx="52.4" cy="236.8" r="8.3" fill="none" stroke="#c9cbcf" stroke-width="1.8"/><path d="M49 226L55.2 228.6L49.6 232.2Z" fill="#5a9af0"/><rect x="43.8" y="254.6" width="19" height="18.8" fill="url(#gb)" stroke="#2a3f74" stroke-width="1"/><rect x="44.4" y="255.2" width="17.8" height="5" fill="#bcd4f6" opacity="0.8"/><rect x="44.2" y="262.6" width="10.4" height="10.4" fill="url(#gw)" stroke="#3c4048" stroke-width="0.7"/><path d="M52.9 282.8H56.6L62.9 301.4H52.9Z" fill="#b4d0f4" stroke="#24386c" stroke-width="0.9"/><rect x="43.6" y="282.8" width="9.3" height="18.6" fill="url(#gw)" stroke="#3c4048" stroke-width="0.8"/><path d="M47.4 296.1H54" stroke="#0a0a0a" stroke-width="1.5"/><path d="M53 293L57 296.1L53 299.2Z" fill="#0a0a0a"/><path d="M43 318.9H47.6" stroke="#e4e4e6" stroke-width="1.5"/><path d="M53.6 318.9H63" stroke="#5a9af0" stroke-width="1.2" stroke-dasharray="2.2 1.2"/><path d="M54 312.3L46.9 327.2" stroke="#5a9af0" stroke-width="1.6"/><path d="M43 347H48.6" stroke="#e4e4e6" stroke-width="1.5"/><path d="M49.8 347H57" stroke="#5a9af0" stroke-width="1.2" stroke-dasharray="2.2 1.2"/><path d="M62.9 340.4L55.2 355.3" stroke="#5a9af0" stroke-width="1.6"/><rect x="44.2" y="370.8" width="18.6" height="11" fill="url(#gw)" stroke="#3c4048" stroke-width="0.6"/><circle cx="58.5" cy="370.2" r="1.9" fill="#5a9af0"/><rect x="44.2" y="398.9" width="17.6" height="11" fill="url(#gw)" stroke="#3c4048" stroke-width="0.6"/><circle cx="48.5" cy="398.4" r="1.9" fill="#5a9af0"/><circle cx="57.4" cy="398.4" r="1.9" fill="#5a9af0"/><path d="M44.1 432.7H61.8" stroke="#e8e8ea" stroke-width="1.3"/><path d="M49 428.8L56.8 436.6V428.8L49 436.6Z" fill="#5a9af0"/><path d="M44.1 468V458.6L51.8 451.1H61.8V468Z" fill="url(#gw)" stroke="#2c2e34" stroke-width="0.9"/><path d="M43.4 457.2L50.4 450.4" stroke="#5a9af0" stroke-width="1.7"/><path d="M45.8 496.8V490Q46.4 482 54.6 481.4H62.3V496.8Z" fill="url(#gw)" stroke="#2c2e34" stroke-width="0.9"/><path d="M43.6 487.2Q45 480.4 52.6 478.6" stroke="#5a9af0" stroke-width="1.8" fill="none"/><path d="M43.6 524.4L45.2 516M60.8 514L62.4 506.2" stroke="#d6d8dc" stroke-width="1.4"/><path d="M45.2 515.6Q47 509.6 50.6 511.6Q53 513.4 54 516.2Q56.4 520.4 60.7 514.5" stroke="#2f86e8" stroke-width="1.7" fill="none"/><circle cx="45.2" cy="515.8" r="2.2" fill="#2860d0" stroke="#0e1e50" stroke-width="0.8"/><circle cx="60.7" cy="514.4" r="2.2" fill="#2860d0" stroke="#0e1e50" stroke-width="0.8"/><path d="M43.2 541L47 538.4V548.4L43.2 551Z" fill="#9cc0ec"/><path d="M50 538L56 535H61L55 538Z" fill="#d8e6f8"/><path d="M50 538H55L61 535V543L55 546H50Z" fill="#b8d2f2" opacity="0.85"/><rect x="47.2" y="542" width="8" height="9.4" fill="url(#gbl)" stroke="#86a8dc" stroke-width="0.4"/><path d="M58 541L63.2 538V547L58 550.4Z" fill="#c6dcf6"/></svg>
<div class="tb" style="left:1242px;top:43px;width:31px;height:185px"></div>
<div class="grip" style="left:1243px;top:44px;width:29px;height:10px"></div>
<svg style="left:1238px;top:43px" width="42" height="190" viewBox="1238 43 42 190"><rect x="1245.95" y="45.8" width="1.05" height="1.05" fill="#0c0c0c"/><rect x="1245.95" y="46.9" width="1.05" height="1.05" fill="#8c8c8c"/><rect x="1245.95" y="48.0" width="1.05" height="1.05" fill="#0c0c0c"/><rect x="1245.95" y="49.1" width="1.05" height="1.05" fill="#8c8c8c"/><rect x="1247.97" y="45.8" width="1.05" height="1.05" fill="#0c0c0c"/><rect x="1247.97" y="46.9" width="1.05" height="1.05" fill="#8c8c8c"/><rect x="1247.97" y="48.0" width="1.05" height="1.05" fill="#0c0c0c"/><rect x="1247.97" y="49.1" width="1.05" height="1.05" fill="#8c8c8c"/><rect x="1249.99" y="45.8" width="1.05" height="1.05" fill="#0c0c0c"/><rect x="1249.99" y="46.9" width="1.05" height="1.05" fill="#8c8c8c"/><rect x="1249.99" y="48.0" width="1.05" height="1.05" fill="#0c0c0c"/><rect x="1249.99" y="49.1" width="1.05" height="1.05" fill="#8c8c8c"/><rect x="1252.01" y="45.8" width="1.05" height="1.05" fill="#0c0c0c"/><rect x="1252.01" y="46.9" width="1.05" height="1.05" fill="#8c8c8c"/><rect x="1252.01" y="48.0" width="1.05" height="1.05" fill="#0c0c0c"/><rect x="1252.01" y="49.1" width="1.05" height="1.05" fill="#8c8c8c"/><rect x="1254.03" y="45.8" width="1.05" height="1.05" fill="#0c0c0c"/><rect x="1254.03" y="46.9" width="1.05" height="1.05" fill="#8c8c8c"/><rect x="1254.03" y="48.0" width="1.05" height="1.05" fill="#0c0c0c"/><rect x="1254.03" y="49.1" width="1.05" height="1.05" fill="#8c8c8c"/><rect x="1256.05" y="45.8" width="1.05" height="1.05" fill="#0c0c0c"/><rect x="1256.05" y="46.9" width="1.05" height="1.05" fill="#8c8c8c"/><rect x="1256.05" y="48.0" width="1.05" height="1.05" fill="#0c0c0c"/><rect x="1256.05" y="49.1" width="1.05" height="1.05" fill="#8c8c8c"/><rect x="1258.07" y="45.8" width="1.05" height="1.05" fill="#0c0c0c"/><rect x="1258.07" y="46.9" width="1.05" height="1.05" fill="#8c8c8c"/><rect x="1258.07" y="48.0" width="1.05" height="1.05" fill="#0c0c0c"/><rect x="1258.07" y="49.1" width="1.05" height="1.05" fill="#8c8c8c"/><rect x="1248" y="59.2" width="11.6" height="6.4" fill="url(#gw)" stroke="#3c4048" stroke-width="0.8"/><rect x="1254.2" y="70.2" width="12" height="6.8" fill="url(#gw)" stroke="#3c4048" stroke-width="0.8"/><rect x="1251.8" y="63.8" width="10.6" height="8" fill="url(#gs)" stroke="#33373f" stroke-width="0.9"/><rect x="1251.8" y="92.2" width="10.6" height="7.8" fill="url(#gs)" stroke="#33373f" stroke-width="0.9"/><rect x="1248" y="86.8" width="11.6" height="6.8" fill="url(#gw)" stroke="#3c4048" stroke-width="0.8"/><rect x="1254.2" y="98" width="12" height="7.4" fill="url(#gw)" stroke="#3c4048" stroke-width="0.8"/><rect x="1248" y="116.2" width="13.2" height="9" fill="url(#gw)" stroke="#3c4048" stroke-width="0.8"/><rect x="1253" y="122.4" width="13.2" height="9" fill="url(#gs)" stroke="#33373f" stroke-width="0.9"/><rect x="1253" y="150.4" width="13.2" height="9.2" fill="url(#gs)" stroke="#33373f" stroke-width="0.9"/><rect x="1247.6" y="144" width="13.2" height="9.6" fill="url(#gw)" stroke="#3c4048" stroke-width="0.8"/><rect x="1245" y="168.8" width="25" height="1.2" fill="#e8e8e8"/><rect x="1252.4" y="182.8" width="12.8" height="8.2" fill="url(#gw)" stroke="#3c4048" stroke-width="0.8"/><text x="1247.6" y="184.8" font-family="Liberation Sans,sans-serif" font-weight="bold" font-size="7.6" fill="#f4f4f4" stroke="#555" stroke-width="0.25">ABC</text><path d="M1267.2 191.6V195.4H1263.4Z" fill="#060606"/><rect x="1247.6" y="205" width="12.8" height="9.2" fill="url(#gs)" stroke="#33373f" stroke-width="0.9"/><rect x="1255.6" y="212.4" width="9.8" height="9.8" fill="#e6e8ee" stroke="#3c4048" stroke-width="0.8"/><path d="M1257 219.4L1262 214.2M1259 221.4L1264.6 215.6M1262 221.6L1264.8 218.6" stroke="#7a8090" stroke-width="1"/></svg>
<div class="abs" style="left:73px;top:43px;width:1165px;height:752px;background:#000;overflow:hidden">
<svg style="left:0;top:0;will-change:transform" width="1165" height="752" viewBox="73 43 1165 752" shape-rendering="geometricPrecision"><rect x="87.3" y="293.3" width="158.3" height="222.8" fill="none" stroke="#2c00d6" stroke-width="1.3"/><path d="M100.4 299.0L232.9 303.6L196.5 353.5L151.0 435.4L100.4 418.0Z" stroke="#de3a02" stroke-width="1.56" fill="none" /><path d="M104.4 302.6L226.0 307.1L191.6 355.6L149.6 431.4L104.4 415.6Z" stroke="#de3a02" stroke-width="1.56" fill="none" /><path d="M100.4 418.0L100.4 504.5L109.8 507.8L151.0 435.6" stroke="#00dede" stroke-width="1" fill="none" /><path d="M100.4 438.4L141.5 451.9" stroke="#00dede" stroke-width="1" fill="none" /><path d="M100.4 418.3L141.5 450.9" stroke="#00dede" stroke-width="1" fill="none" /><path d="M100.4 458.2L132.3 468.8" stroke="#00dede" stroke-width="1" fill="none" /><path d="M100.4 461.1L130.3 472.1" stroke="#00dede" stroke-width="1" fill="none" /><path d="M100.4 438.4L132.3 468.8" stroke="#00dede" stroke-width="1" fill="none" /><rect x="104.8" y="303.2" width="14.8" height="7.2" fill="none" stroke="#7e7e7e" stroke-width="1.1"/><rect x="107.2" y="304.6" width="10.6" height="4.2" fill="none" stroke="#7e7e7e" stroke-width="0.7"/><path d="M124.2 303.6L128.2 303.6L128.2 317.8L124.2 317.8Z" stroke="#b4b4b4" stroke-width="0.9" fill="none" /><path d="M124.2 303.6L128.2 317.8" stroke="#b4b4b4" stroke-width="0.7" fill="none" /><path d="M128.2 303.6L124.2 317.8" stroke="#b4b4b4" stroke-width="0.7" fill="none" /><rect x="130.8" y="304.4" width="5.2" height="12" rx="1.6" fill="none" stroke="#b4b4b4" stroke-width="1"/><rect x="137.6" y="304.6" width="3.6" height="2" fill="none" stroke="#b4b4b4" stroke-width="0.7"/><rect x="142.2" y="308.4" width="4.6" height="7.8" fill="none" stroke="#b4b4b4" stroke-width="0.9"/><circle cx="144.5" cy="310.4" r="1" fill="none" stroke="#b4b4b4" stroke-width="0.6"/><rect x="148.8" y="304.4" width="23" height="5.4" fill="#8a8a8a" stroke="#7e7e7e" stroke-width="0.4"/><rect x="151" y="305.4" width="2.2" height="3.2" fill="#3c3c3c"/><rect x="154.6" y="305.4" width="2.2" height="3.2" fill="#3c3c3c"/><rect x="158.2" y="305.4" width="2.2" height="3.2" fill="#3c3c3c"/><rect x="162" y="305.4" width="2.2" height="3.2" fill="#3c3c3c"/><rect x="165.6" y="305.4" width="2.2" height="3.2" fill="#3c3c3c"/><rect x="169" y="305.4" width="2.2" height="3.2" fill="#3c3c3c"/><path d="M185.00 305.8V312.8" stroke="#7e7e7e" stroke-width="1.1"/><path d="M187.05 305.8V312.8" stroke="#7e7e7e" stroke-width="1.1"/><path d="M189.10 305.8V312.8" stroke="#7e7e7e" stroke-width="1.1"/><path d="M191.15 305.8V312.8" stroke="#7e7e7e" stroke-width="1.1"/><path d="M193.20 305.8V312.8" stroke="#7e7e7e" stroke-width="1.1"/><path d="M195.25 305.8V312.8" stroke="#7e7e7e" stroke-width="1.1"/><path d="M197.30 305.8V312.8" stroke="#7e7e7e" stroke-width="1.1"/><path d="M199.35 305.8V312.8" stroke="#7e7e7e" stroke-width="1.1"/><path d="M201.40 305.8V312.8" stroke="#7e7e7e" stroke-width="1.1"/><path d="M203.45 305.8V312.8" stroke="#7e7e7e" stroke-width="1.1"/><path d="M205.50 305.8V312.8" stroke="#7e7e7e" stroke-width="1.1"/><path d="M207.55 305.8V312.8" stroke="#7e7e7e" stroke-width="1.1"/><path d="M209.60 305.8V312.8" stroke="#7e7e7e" stroke-width="1.1"/><path d="M184.0 315.4L202.0 315.4L198.0 319.6L184.0 319.6Z" stroke="#7e7e7e" stroke-width="0.8" fill="none" /><path d="M184.0 319.4L192.0 315.6L197.0 319.4L202.0 315.6" stroke="#7e7e7e" stroke-width="0.7" fill="none" /><rect x="201.2" y="317.1" width="12.4" height="12.6" transform="rotate(32 207.4 323.4)" stroke="#7e7e7e" stroke-width="1.1" fill="none"/><path d="M205.6 312.8L216.4 319.2" stroke="#7e7e7e" stroke-width="0.8" fill="none" /><path d="M207.2 311.6L217.4 317.4" stroke="#7e7e7e" stroke-width="0.8" fill="none" /><path d="M212.0 313.6L218.0 317.0L216.6 320.0" stroke="#7e7e7e" stroke-width="0.8" fill="none" /><rect x="105" y="321.4" width="5.4" height="5" fill="none" stroke="#7e7e7e" stroke-width="1.1"/><rect x="105" y="327" width="5.4" height="5" fill="none" stroke="#7e7e7e" stroke-width="1.1"/><rect x="105" y="332.6" width="5.4" height="5" fill="none" stroke="#7e7e7e" stroke-width="1.1"/><rect x="112.4" y="327.8" width="6.8" height="6.8" fill="none" stroke="#7e7e7e" stroke-width="1"/><path d="M113.4 328.8l1.4 1.4M118.2 328.8l-1.4 1.4M113.4 333.6l1.4-1.4M118.2 333.6l-1.4-1.4" stroke="#7e7e7e" stroke-width="0.7"/><rect x="183.3" y="339.3" width="5" height="5" transform="rotate(30 185.8 341.8)" stroke="#7e7e7e" stroke-width="1.1" fill="none"/><path d="M183.2 339.4L184.4 341.2" stroke="#7e7e7e" stroke-width="0.8" fill="none" /><path d="M188.6 339.6L187.6 341.4" stroke="#7e7e7e" stroke-width="0.8" fill="none" /><rect x="174.2" y="347.6" width="4.4" height="4.4" transform="rotate(30 176.4 349.8)" stroke="#7e7e7e" stroke-width="1.2" fill="none"/><rect x="178.6" y="350.2" width="4.4" height="4.4" transform="rotate(30 180.8 352.4)" stroke="#7e7e7e" stroke-width="1.2" fill="none"/><rect x="172.9" y="348.2" width="11" height="6.4" transform="rotate(30 178.4 351.4)" stroke="#7e7e7e" stroke-width="1" fill="none"/><rect x="195.4" y="340.6" width="3.6" height="3.6" transform="rotate(30 197.2 342.4)" stroke="#7e7e7e" stroke-width="1.1" fill="none"/><rect x="192.8" y="345.0" width="3.6" height="3.6" transform="rotate(30 194.6 346.8)" stroke="#7e7e7e" stroke-width="1.1" fill="none"/><rect x="190.2" y="349.4" width="3.6" height="3.6" transform="rotate(30 192.0 351.2)" stroke="#7e7e7e" stroke-width="1.1" fill="none"/><rect x="191.8" y="339.6" width="5.6" height="14.4" transform="rotate(30 194.6 346.8)" stroke="#7e7e7e" stroke-width="1" fill="none"/><rect x="169.1" y="361.4" width="12.6" height="12.4" transform="rotate(30 175.4 367.6)" stroke="#7e7e7e" stroke-width="1.1" fill="none"/><path d="M178.6 375.6L183.2 366.8" stroke="#7e7e7e" stroke-width="0.8" fill="none" /><rect x="177.2" y="371.4" width="2.4" height="2.4" transform="rotate(30 178.4 372.6)" stroke="#7e7e7e" stroke-width="0.8" fill="none"/><rect x="163.4" y="379.3" width="6.4" height="4.6" transform="rotate(30 166.6 381.6)" stroke="#b4b4b4" stroke-width="1" fill="none"/><circle cx="167.6" cy="380.8" r="1.7" fill="#c8c8c8"/><rect x="167.1" y="384.1" width="4.6" height="14.6" transform="rotate(30 169.4 391.4)" stroke="#7e7e7e" stroke-width="0.6" fill="#7a7a7a"/><path d="M171.2 385.6l3.4 2" stroke="#cfcfcf" stroke-width="0.5"/><path d="M169.7 388.2l3.4 2" stroke="#cfcfcf" stroke-width="0.5"/><path d="M168.2 390.8l3.4 2" stroke="#cfcfcf" stroke-width="0.5"/><path d="M166.7 393.4l3.4 2" stroke="#cfcfcf" stroke-width="0.5"/><path d="M165.2 396.0l3.4 2" stroke="#cfcfcf" stroke-width="0.5"/><path d="M157.8 402.0L163.2 404.2L150.0 428.0L144.8 425.6Z" stroke="#7e7e7e" stroke-width="0.5" fill="#6c6c6c" /><path d="M157.40 403.20l5 2.2" stroke="#3a3a3a" stroke-width="0.5"/><path d="M156.18 405.40l5 2.2" stroke="#3a3a3a" stroke-width="0.5"/><path d="M154.96 407.60l5 2.2" stroke="#3a3a3a" stroke-width="0.5"/><path d="M153.74 409.80l5 2.2" stroke="#3a3a3a" stroke-width="0.5"/><path d="M152.52 412.00l5 2.2" stroke="#3a3a3a" stroke-width="0.5"/><path d="M151.30 414.20l5 2.2" stroke="#3a3a3a" stroke-width="0.5"/><path d="M150.08 416.40l5 2.2" stroke="#3a3a3a" stroke-width="0.5"/><path d="M148.86 418.60l5 2.2" stroke="#3a3a3a" stroke-width="0.5"/><path d="M147.64 420.80l5 2.2" stroke="#3a3a3a" stroke-width="0.5"/><path d="M146.42 423.00l5 2.2" stroke="#3a3a3a" stroke-width="0.5"/><path d="M145.20 425.20l5 2.2" stroke="#3a3a3a" stroke-width="0.5"/><rect x="138.1" y="413.4" width="5.4" height="5.2" transform="rotate(25 140.8 416.0)" stroke="#7e7e7e" stroke-width="1" fill="none"/><path d="M139.4 412.6L144.0 414.6" stroke="#7e7e7e" stroke-width="0.8" fill="none" /><rect x="131.4" y="421.4" width="12.4" height="4.4" transform="rotate(20 137.6 423.6)" stroke="#7e7e7e" stroke-width="0.6" fill="#727272"/><rect x="133.9" y="421.4" width="2.6" height="2.4" transform="rotate(20 135.2 422.6)" stroke="#7e7e7e" stroke-width="0.5" fill="#202020"/><rect x="138.3" y="423.0" width="2.6" height="2.4" transform="rotate(20 139.6 424.2)" stroke="#7e7e7e" stroke-width="0.5" fill="#202020"/><rect x="118.2" y="416.4" width="10" height="4" transform="rotate(18 123.2 418.4)" stroke="#b4b4b4" stroke-width="1.2" fill="none"/><rect x="120.0" y="417.6" width="6.4" height="1.6" transform="rotate(18 123.2 418.4)" stroke="#b4b4b4" stroke-width="0.6" fill="none"/><rect x="110.9" y="413.6" width="2.6" height="4" transform="rotate(15 112.2 415.6)" stroke="#b4b4b4" stroke-width="0.9" fill="none"/><rect x="104.8" y="407.2" width="2.6" height="4" fill="none" stroke="#b4b4b4" stroke-width="0.8"/><rect x="128.1" y="410.9" width="2.6" height="3.4" transform="rotate(15 129.4 412.6)" stroke="#7e7e7e" stroke-width="0.8" fill="none"/><path d="M104.6 403.2L110.6 403.2" stroke="#b4b4b4" stroke-width="0.7" fill="none" /><path d="M104.4 355.0L121.0 355.0" stroke="#de3a02" stroke-width="1.92" fill="none" /><path d="M122.3 354.9L168.5 350.6L188.6 361.6" stroke="#de3a02" stroke-width="1.92" fill="none" /><path d="M156.5 372.3L176.3 382.7" stroke="#de3a02" stroke-width="1.8" fill="none" /><path d="M160.5 393.7L168.4 397.6" stroke="#de3a02" stroke-width="1.8" fill="none" /><path d="M157.5 400.6L144.6 422.8" stroke="#de3a02" stroke-width="1.92" fill="none" /><path d="M104.4 395.1L112.4 395.1L112.4 403.6L134.7 410.5L128.7 424.0" stroke="#de3a02" stroke-width="1.92" fill="none" /><path d="M112.4 395.3L120.8 395.6" stroke="#de3a02" stroke-width="1.68" fill="none" /><path d="M122.9 303.3L148.8 304.0L148.8 318.7L129.1 318.7L129.1 328.3" stroke="#de3a02" stroke-width="1.8" fill="none" /><path d="M122.9 303.3L122.9 312.0" stroke="#de3a02" stroke-width="1.44" fill="none" /><path d="M173.9 305.6L173.9 313.6" stroke="#de3a02" stroke-width="1.8" fill="none" /><path d="M183.1 314.2L221.0 314.7" stroke="#de3a02" stroke-width="1.8" fill="none" /><path d="M182.0 312.1L181.0 329.4" stroke="#de3a02" stroke-width="1.8" fill="none" /><path d="M192.0 314.8L192.0 328.7L204.8 337.2" stroke="#de3a02" stroke-width="1.8" fill="none" /><path d="M121.2 328.6L181.2 329.8L137.8 401.4L121.2 395.6Z" stroke="#00dede" stroke-width="2" fill="none" /><path d="M130.6 340.2Q130.2 336.6 135 336.2Q138.6 336.4 140.6 336.8Q142.4 334.4 146 334.6Q149.6 334.6 151 336.6Q156 336.2 159.4 337.4Q161.4 339.6 160 342Q156 343.2 151.6 341.8Q149.6 342.6 148.4 344.6L146.4 345.8Q144.6 344.4 143.4 342.6Q140.4 341.4 137.8 342.8Q132 343.4 130.6 340.2Z" stroke="#00dede" stroke-width="1" fill="none"/><path d="M134.2 359.4Q138 357.8 141.6 360Q145.8 358 148 360.6Q149.2 363.6 146.8 366.2Q144 368 142.8 371Q141.6 374.6 139.2 376.4Q137.6 379 137.4 382.4Q136 384.6 134.6 383.6Q133 380 131.6 376Q129.4 372.6 129.4 370Q131.4 367.6 134.6 367.2Q136.6 364.4 134.2 359.4Z" stroke="#00dede" stroke-width="1" fill="none"/><g transform="rotate(0 160.0 326.0)"><rect x="152.3" y="324.0" width="4" height="4.0" fill="none" stroke="#f01a00" stroke-width="1.1"/><rect x="163.7" y="324.0" width="4" height="4.0" fill="none" stroke="#f01a00" stroke-width="1.1"/><rect x="156.8" y="323.4" width="6.4" height="5.2" fill="none" stroke="#eaea00" stroke-width="1.1"/></g><g transform="rotate(-57 148.6 391.2)"><rect x="141.4" y="389.3" width="4" height="3.8" fill="none" stroke="#f01a00" stroke-width="1.1"/><rect x="151.8" y="389.3" width="4" height="3.8" fill="none" stroke="#f01a00" stroke-width="1.1"/><rect x="145.4" y="388.7" width="6.4" height="5.0" fill="none" stroke="#eaea00" stroke-width="1.1"/></g><rect x="106.2" y="348.2" width="11.6" height="6" fill="none" stroke="#eaea00" stroke-width="1.1"/><path d="M108 352.4L111 350.6L113 351.6L115.6 350.2" stroke="#f01a00" stroke-width="1.6" fill="none"/><path d="M109 348L112 343L115.2 348" stroke="#eaea00" stroke-width="1" fill="none"/><path d="M110 344.4l1.6-2M113.8 344.4l-1.4-2" stroke="#f01a00" stroke-width="1.1"/><path d="M114.6 367.2Q118 366.2 121 367.2V378.6H114.6Z" fill="none" stroke="#eaea00" stroke-width="1.1"/><path d="M110.6 369.4L113.8 372.8L110.4 375.6" stroke="#eaea00" stroke-width="1" fill="none"/><path d="M111 370.4v3.6M117.4 369.6l2 2.2l-2 2.4M119.8 376.6l1.4-1.4" stroke="#f01a00" stroke-width="1.5" fill="none"/><path d="M128.6 327.6L122.2 327.6A6.4 6.4 0 0 1 128.6 321.2Z" stroke="#6c84ee" stroke-width="1" fill="none"/><path d="M128.6 327.6L125.4 324.4" stroke="#6c84ee" stroke-width="0.8"/><path d="M134.6 318.2L141.6 318.2A7 7 0 0 1 134.6 325.2Z" stroke="#6c84ee" stroke-width="1" fill="none"/><path d="M134.6 318.2L138.1 321.7" stroke="#6c84ee" stroke-width="0.8"/><path d="M181.6 312.6L181.6 320.2A7.6 7.6 0 0 1 174.0 312.6Z" stroke="#6c84ee" stroke-width="1" fill="none"/><path d="M181.6 312.6L177.8 316.4" stroke="#6c84ee" stroke-width="0.8"/><path d="M181.4 329.0L185.1 322.6A7.4 7.4 0 0 1 187.8 332.7Z" stroke="#6c84ee" stroke-width="1" fill="none"/><path d="M181.4 329.0L186.5 327.6" stroke="#6c84ee" stroke-width="0.8"/><path d="M120.6 394.8L113.8 392.3A7.2 7.2 0 0 1 123.1 388.0Z" stroke="#6c84ee" stroke-width="1" fill="none"/><path d="M120.6 394.8L118.4 390.2" stroke="#6c84ee" stroke-width="0.8"/><path d="M126.6 407.0L120.4 404.7A6.6 6.6 0 0 1 128.9 400.8Z" stroke="#6c84ee" stroke-width="1" fill="none"/><path d="M126.6 407.0L124.6 402.8" stroke="#6c84ee" stroke-width="0.8"/><path d="M160.6 393.4L159.4 400.3A7 7 0 0 1 153.7 392.2Z" stroke="#6c84ee" stroke-width="1" fill="none"/><path d="M160.6 393.4L156.5 396.2" stroke="#6c84ee" stroke-width="0.8"/><rect x="229.3" y="391.5" width="5" height="5" transform="rotate(25 231.8 394.0)" stroke="#7e7e7e" stroke-width="1.1" fill="none"/><path d="M229.6 391.2L230.6 393.0" stroke="#7e7e7e" stroke-width="0.8" fill="none" /><path d="M234.8 392.4L233.6 394.0" stroke="#7e7e7e" stroke-width="0.8" fill="none" /><rect x="222.6" y="398.0" width="4.4" height="4.4" transform="rotate(25 224.8 400.2)" stroke="#7e7e7e" stroke-width="1.2" fill="none"/><rect x="227.2" y="400.2" width="4.4" height="4.4" transform="rotate(25 229.4 402.4)" stroke="#7e7e7e" stroke-width="1.2" fill="none"/><rect x="221.5" y="398.1" width="11.4" height="6.6" transform="rotate(25 227.2 401.4)" stroke="#7e7e7e" stroke-width="1" fill="none"/><g transform="translate(181.2 0)"><rect x="87.3" y="293.3" width="158.3" height="222.8" fill="none" stroke="#2c00d6" stroke-width="1.3"/><path d="M100.4 299.0L232.9 303.6L196.5 353.5L151.0 435.4L100.4 418.0Z" stroke="#de3a02" stroke-width="1.56" fill="none" /><path d="M104.4 302.6L226.0 307.1L191.6 355.6L149.6 431.4L104.4 415.6Z" stroke="#de3a02" stroke-width="1.56" fill="none" /><path d="M100.4 418.0L100.4 504.5L109.8 507.8L151.0 435.6" stroke="#00dede" stroke-width="1" fill="none" /><path d="M100.4 438.4L141.5 451.9" stroke="#00dede" stroke-width="1" fill="none" /><path d="M100.4 418.3L141.5 450.9" stroke="#00dede" stroke-width="1" fill="none" /><path d="M100.4 458.2L132.3 468.8" stroke="#00dede" stroke-width="1" fill="none" /><path d="M100.4 461.1L130.3 472.1" stroke="#00dede" stroke-width="1" fill="none" /><path d="M100.4 438.4L132.3 468.8" stroke="#00dede" stroke-width="1" fill="none" /><rect x="104.8" y="303.2" width="14.8" height="7.2" fill="none" stroke="#7e7e7e" stroke-width="1.1"/><rect x="107.2" y="304.6" width="10.6" height="4.2" fill="none" stroke="#7e7e7e" stroke-width="0.7"/><path d="M124.2 303.6L128.2 303.6L128.2 317.8L124.2 317.8Z" stroke="#7e7e7e" stroke-width="0.9" fill="none" /><path d="M124.2 303.6L128.2 317.8" stroke="#7e7e7e" stroke-width="0.7" fill="none" /><path d="M128.2 303.6L124.2 317.8" stroke="#7e7e7e" stroke-width="0.7" fill="none" /><rect x="130.8" y="304.4" width="5.2" height="12" rx="1.6" fill="none" stroke="#b4b4b4" stroke-width="1"/><rect x="137.6" y="304.6" width="3.6" height="2" fill="none" stroke="#b4b4b4" stroke-width="0.7"/><rect x="142.2" y="308.4" width="4.6" height="7.8" fill="none" stroke="#b4b4b4" stroke-width="0.9"/><circle cx="144.5" cy="310.4" r="1" fill="none" stroke="#b4b4b4" stroke-width="0.6"/><rect x="148.8" y="304.4" width="23" height="5.4" fill="#8a8a8a" stroke="#7e7e7e" stroke-width="0.4"/><rect x="151" y="305.4" width="2.2" height="3.2" fill="#3c3c3c"/><rect x="154.6" y="305.4" width="2.2" height="3.2" fill="#3c3c3c"/><rect x="158.2" y="305.4" width="2.2" height="3.2" fill="#3c3c3c"/><rect x="162" y="305.4" width="2.2" height="3.2" fill="#3c3c3c"/><rect x="165.6" y="305.4" width="2.2" height="3.2" fill="#3c3c3c"/><rect x="169" y="305.4" width="2.2" height="3.2" fill="#3c3c3c"/><path d="M185.00 305.8V312.8" stroke="#7e7e7e" stroke-width="1.1"/><path d="M187.05 305.8V312.8" stroke="#7e7e7e" stroke-width="1.1"/><path d="M189.10 305.8V312.8" stroke="#7e7e7e" stroke-width="1.1"/><path d="M191.15 305.8V312.8" stroke="#7e7e7e" stroke-width="1.1"/><path d="M193.20 305.8V312.8" stroke="#7e7e7e" stroke-width="1.1"/><path d="M195.25 305.8V312.8" stroke="#7e7e7e" stroke-width="1.1"/><path d="M197.30 305.8V312.8" stroke="#7e7e7e" stroke-width="1.1"/><path d="M199.35 305.8V312.8" stroke="#7e7e7e" stroke-width="1.1"/><path d="M201.40 305.8V312.8" stroke="#7e7e7e" stroke-width="1.1"/><path d="M203.45 305.8V312.8" stroke="#7e7e7e" stroke-width="1.1"/><path d="M205.50 305.8V312.8" stroke="#7e7e7e" stroke-width="1.1"/><path d="M207.55 305.8V312.8" stroke="#7e7e7e" stroke-width="1.1"/><path d="M209.60 305.8V312.8" stroke="#7e7e7e" stroke-width="1.1"/><path d="M210.4 306.6L213.4 306.4L221.0 313.6L218.8 317.6Z" stroke="#7e7e7e" stroke-width="0.5" fill="#6a6a6a" /><path d="M211.6 306.8l-2 3.6" stroke="#2a2a2a" stroke-width="0.5"/><path d="M213.3 308.6l-2 3.6" stroke="#2a2a2a" stroke-width="0.5"/><path d="M215.0 310.4l-2 3.6" stroke="#2a2a2a" stroke-width="0.5"/><path d="M216.7 312.2l-2 3.6" stroke="#2a2a2a" stroke-width="0.5"/><path d="M218.4 314.0l-2 3.6" stroke="#2a2a2a" stroke-width="0.5"/><path d="M184.0 315.4L202.0 315.4L198.0 319.6L184.0 319.6Z" stroke="#7e7e7e" stroke-width="0.8" fill="none" /><path d="M184.0 319.4L192.0 315.6L197.0 319.4L202.0 315.6" stroke="#7e7e7e" stroke-width="0.7" fill="none" /><rect x="203.6" y="316.0" width="10" height="10" transform="rotate(32 208.6 321.0)" stroke="#7e7e7e" stroke-width="1.1" fill="none"/><rect x="105" y="321.4" width="5.4" height="5" fill="none" stroke="#7e7e7e" stroke-width="1.1"/><rect x="105" y="327" width="5.4" height="5" fill="none" stroke="#7e7e7e" stroke-width="1.1"/><rect x="105" y="332.6" width="5.4" height="5" fill="none" stroke="#7e7e7e" stroke-width="1.1"/><rect x="112.4" y="327.8" width="6.8" height="6.8" fill="none" stroke="#7e7e7e" stroke-width="1"/><path d="M113.4 328.8l1.4 1.4M118.2 328.8l-1.4 1.4M113.4 333.6l1.4-1.4M118.2 333.6l-1.4-1.4" stroke="#7e7e7e" stroke-width="0.7"/><rect x="105" y="376.6" width="5.4" height="6.6" fill="none" stroke="#7e7e7e" stroke-width="1.2"/><rect x="105" y="383.6" width="5.4" height="6.6" fill="none" stroke="#7e7e7e" stroke-width="1.2"/><rect x="183.3" y="339.3" width="5" height="5" transform="rotate(30 185.8 341.8)" stroke="#7e7e7e" stroke-width="1.1" fill="none"/><path d="M183.2 339.4L184.4 341.2" stroke="#7e7e7e" stroke-width="0.8" fill="none" /><path d="M188.6 339.6L187.6 341.4" stroke="#7e7e7e" stroke-width="0.8" fill="none" /><rect x="174.2" y="347.6" width="4.4" height="4.4" transform="rotate(30 176.4 349.8)" stroke="#7e7e7e" stroke-width="1.2" fill="none"/><rect x="178.6" y="350.2" width="4.4" height="4.4" transform="rotate(30 180.8 352.4)" stroke="#7e7e7e" stroke-width="1.2" fill="none"/><rect x="172.9" y="348.2" width="11" height="6.4" transform="rotate(30 178.4 351.4)" stroke="#7e7e7e" stroke-width="1" fill="none"/><rect x="195.4" y="340.6" width="3.6" height="3.6" transform="rotate(30 197.2 342.4)" stroke="#7e7e7e" stroke-width="1.1" fill="none"/><rect x="192.8" y="345.0" width="3.6" height="3.6" transform="rotate(30 194.6 346.8)" stroke="#7e7e7e" stroke-width="1.1" fill="none"/><rect x="190.2" y="349.4" width="3.6" height="3.6" transform="rotate(30 192.0 351.2)" stroke="#7e7e7e" stroke-width="1.1" fill="none"/><rect x="191.8" y="339.6" width="5.6" height="14.4" transform="rotate(30 194.6 346.8)" stroke="#7e7e7e" stroke-width="1" fill="none"/><path d="M122.9 303.3L148.8 304.0L148.8 318.7L129.1 318.7L129.1 328.3" stroke="#de3a02" stroke-width="1.8" fill="none" /><path d="M122.9 303.3L122.9 312.0" stroke="#de3a02" stroke-width="1.44" fill="none" /><path d="M173.9 305.6L173.9 313.6" stroke="#de3a02" stroke-width="1.8" fill="none" /><path d="M183.1 314.2L221.0 314.7" stroke="#de3a02" stroke-width="1.8" fill="none" /><path d="M182.0 312.1L181.0 329.4" stroke="#de3a02" stroke-width="1.8" fill="none" /><path d="M192.0 314.8L192.0 324.4" stroke="#de3a02" stroke-width="1.8" fill="none" /><path d="M192.4 325.0L198.2 328.6" stroke="#00dede" stroke-width="1.8" fill="none" /><path d="M201.4 330.6L207.2 334.2" stroke="#00dede" stroke-width="1.8" fill="none" /><rect x="169.1" y="361.4" width="12.6" height="12.4" transform="rotate(30 175.4 367.6)" stroke="#7e7e7e" stroke-width="1.1" fill="none"/><path d="M178.6 375.6L183.2 366.8" stroke="#7e7e7e" stroke-width="0.8" fill="none" /><rect x="177.2" y="371.4" width="2.4" height="2.4" transform="rotate(30 178.4 372.6)" stroke="#7e7e7e" stroke-width="0.8" fill="none"/><rect x="157.2" y="381.5" width="5.4" height="5.4" transform="rotate(30 159.9 384.2)" stroke="#7e7e7e" stroke-width="1.2" fill="none"/><rect x="170.4" y="383.0" width="3.6" height="3.6" transform="rotate(30 172.2 384.8)" stroke="#7e7e7e" stroke-width="1.1" fill="none"/><rect x="168.0" y="387.4" width="3.6" height="3.6" transform="rotate(30 169.8 389.2)" stroke="#7e7e7e" stroke-width="1.1" fill="none"/><rect x="165.6" y="391.8" width="3.6" height="3.6" transform="rotate(30 167.4 393.6)" stroke="#7e7e7e" stroke-width="1.1" fill="none"/><rect x="167.0" y="382.0" width="5.6" height="14.4" transform="rotate(30 169.8 389.2)" stroke="#7e7e7e" stroke-width="1" fill="none"/><path d="M157.8 402.0L163.2 404.2L150.0 428.0L144.8 425.6Z" stroke="#7e7e7e" stroke-width="0.5" fill="#6c6c6c" /><path d="M157.40 403.20l5 2.2" stroke="#3a3a3a" stroke-width="0.5"/><path d="M156.18 405.40l5 2.2" stroke="#3a3a3a" stroke-width="0.5"/><path d="M154.96 407.60l5 2.2" stroke="#3a3a3a" stroke-width="0.5"/><path d="M153.74 409.80l5 2.2" stroke="#3a3a3a" stroke-width="0.5"/><path d="M152.52 412.00l5 2.2" stroke="#3a3a3a" stroke-width="0.5"/><path d="M151.30 414.20l5 2.2" stroke="#3a3a3a" stroke-width="0.5"/><path d="M150.08 416.40l5 2.2" stroke="#3a3a3a" stroke-width="0.5"/><path d="M148.86 418.60l5 2.2" stroke="#3a3a3a" stroke-width="0.5"/><path d="M147.64 420.80l5 2.2" stroke="#3a3a3a" stroke-width="0.5"/><path d="M146.42 423.00l5 2.2" stroke="#3a3a3a" stroke-width="0.5"/><path d="M145.20 425.20l5 2.2" stroke="#3a3a3a" stroke-width="0.5"/><rect x="150.2" y="416.8" width="4.4" height="4.4" transform="rotate(25 152.4 419.0)" stroke="#b4b4b4" stroke-width="0.9" fill="none"/><path d="M128.6 418.6L150.4 426.2L149.0 430.6L127.2 422.8Z" stroke="#7e7e7e" stroke-width="0.5" fill="#7c7c7c" /><rect x="111.2" y="416.6" width="10" height="4" transform="rotate(18 116.2 418.6)" stroke="#b4b4b4" stroke-width="1.2" fill="none"/><rect x="113.0" y="417.8" width="6.4" height="1.6" transform="rotate(18 116.2 418.6)" stroke="#b4b4b4" stroke-width="0.6" fill="none"/><rect x="108.9" y="413.0" width="2.6" height="4" transform="rotate(15 110.2 415.0)" stroke="#b4b4b4" stroke-width="0.9" fill="none"/><rect x="104.8" y="407.8" width="3" height="4" fill="none" stroke="#b4b4b4" stroke-width="0.8"/><path d="M104.6 403.2L110.6 403.2" stroke="#b4b4b4" stroke-width="0.7" fill="none" /><path d="M104.4 355.0L121.0 355.0" stroke="#de3a02" stroke-width="1.92" fill="none" /><path d="M122.3 354.9L168.5 350.6L188.6 361.6" stroke="#de3a02" stroke-width="1.92" fill="none" /><path d="M162.4 374.8L176.3 382.0" stroke="#de3a02" stroke-width="1.8" fill="none" /><path d="M160.5 393.7L168.4 397.6" stroke="#de3a02" stroke-width="1.8" fill="none" /><path d="M157.5 400.6L153.5 407.6" stroke="#de3a02" stroke-width="1.92" fill="none" /><path d="M104.4 395.1L112.4 395.1L112.4 403.6L130.6 409.0L124.7 421.6" stroke="#de3a02" stroke-width="1.92" fill="none" /><path d="M112.4 395.3L120.8 395.6" stroke="#de3a02" stroke-width="1.68" fill="none" /><path d="M121.2 328.6L181.2 329.8L137.8 401.4L121.2 395.6Z" stroke="#00dede" stroke-width="2" fill="none" /><path d="M121.2 328.6L122.5 328.6" stroke="#f0300a" stroke-width="2"/><path d="M131.9 328.8L134.5 328.9" stroke="#f0300a" stroke-width="2"/><path d="M143.9 329.1L146.5 329.1" stroke="#f0300a" stroke-width="2"/><path d="M155.9 329.3L158.5 329.3" stroke="#f0300a" stroke-width="2"/><path d="M167.9 329.5L170.5 329.6" stroke="#f0300a" stroke-width="2"/><path d="M179.9 329.8L181.2 329.8" stroke="#f0300a" stroke-width="2"/><path d="M181.2 329.8L180.5 330.9" stroke="#f0300a" stroke-width="2"/><path d="M175.7 338.9L174.3 341.1" stroke="#f0300a" stroke-width="2"/><path d="M169.5 349.1L168.1 351.4" stroke="#f0300a" stroke-width="2"/><path d="M163.3 359.4L161.9 361.6" stroke="#f0300a" stroke-width="2"/><path d="M157.1 369.6L155.7 371.8" stroke="#f0300a" stroke-width="2"/><path d="M150.9 379.8L149.5 382.1" stroke="#f0300a" stroke-width="2"/><path d="M144.7 390.1L143.3 392.3" stroke="#f0300a" stroke-width="2"/><path d="M138.5 400.3L137.8 401.4" stroke="#f0300a" stroke-width="2"/><path d="M137.8 401.4L136.6 401.0" stroke="#f0300a" stroke-width="2"/><path d="M122.4 396.0L121.2 395.6" stroke="#f0300a" stroke-width="2"/><path d="M121.2 395.6L121.2 394.3" stroke="#f0300a" stroke-width="2"/><path d="M121.2 385.7L121.2 383.1" stroke="#f0300a" stroke-width="2"/><path d="M121.2 374.6L121.2 372.0" stroke="#f0300a" stroke-width="2"/><path d="M121.2 363.4L121.2 360.8" stroke="#f0300a" stroke-width="2"/><path d="M121.2 352.2L121.2 349.6" stroke="#f0300a" stroke-width="2"/><path d="M121.2 341.1L121.2 338.5" stroke="#f0300a" stroke-width="2"/><path d="M121.2 329.9L121.2 328.6" stroke="#f0300a" stroke-width="2"/><path d="M130.6 340.2Q130.2 336.6 135 336.2Q138.6 336.4 140.6 336.8Q142.4 334.4 146 334.6Q149.6 334.6 151 336.6Q156 336.2 159.4 337.4Q161.4 339.6 160 342Q156 343.2 151.6 341.8Q149.6 342.6 148.4 344.6L146.4 345.8Q144.6 344.4 143.4 342.6Q140.4 341.4 137.8 342.8Q132 343.4 130.6 340.2Z" stroke="#00dede" stroke-width="1" fill="none"/><path d="M134.2 359.4Q138 357.8 141.6 360Q145.8 358 148 360.6Q149.2 363.6 146.8 366.2Q144 368 142.8 371Q141.6 374.6 139.2 376.4Q137.6 379 137.4 382.4Q136 384.6 134.6 383.6Q133 380 131.6 376Q129.4 372.6 129.4 370Q131.4 367.6 134.6 367.2Q136.6 364.4 134.2 359.4Z" stroke="#00dede" stroke-width="1" fill="none"/><g transform="rotate(0 160.0 326.0)"><rect x="152.3" y="324.0" width="4" height="4.0" fill="none" stroke="#f01a00" stroke-width="1.1"/><rect x="163.7" y="324.0" width="4" height="4.0" fill="none" stroke="#f01a00" stroke-width="1.1"/><rect x="156.8" y="323.4" width="6.4" height="5.2" fill="none" stroke="#eaea00" stroke-width="1.1"/></g><rect x="106.2" y="348.2" width="11.6" height="6" fill="none" stroke="#eaea00" stroke-width="1.1"/><path d="M108 352.4L111 350.6L113 351.6L115.6 350.2" stroke="#f01a00" stroke-width="1.6" fill="none"/><path d="M109 348L112 343L115.2 348" stroke="#eaea00" stroke-width="1" fill="none"/><path d="M110 344.4l1.6-2M113.8 344.4l-1.4-2" stroke="#f01a00" stroke-width="1.1"/><path d="M114.6 362.2Q118 361.2 121.6 362.2V373.6H114.6Z" fill="none" stroke="#eaea00" stroke-width="1.1"/><path d="M110.6 364.4L113.8 367.8L110.4 370.6" stroke="#eaea00" stroke-width="1" fill="none"/><path d="M111 365.4v3.6M117.4 364.6l2 2.2l-2 2.4M119.8 371.6l1.4-1.4" stroke="#f01a00" stroke-width="1.5" fill="none"/><g transform="rotate(-72 146.6 410.6)"><rect x="139.1" y="408.7" width="4" height="3.8" fill="none" stroke="#f01a00" stroke-width="1.1"/><rect x="150.1" y="408.7" width="4" height="3.8" fill="none" stroke="#f01a00" stroke-width="1.1"/><rect x="143.4" y="408.1" width="6.4" height="5.0" fill="none" stroke="#eaea00" stroke-width="1.1"/></g><path d="M128.6 327.6L122.2 327.6A6.4 6.4 0 0 1 128.6 321.2Z" stroke="#6c84ee" stroke-width="1" fill="none"/><path d="M128.6 327.6L125.4 324.4" stroke="#6c84ee" stroke-width="0.8"/><path d="M134.6 318.2L141.6 318.2A7 7 0 0 1 134.6 325.2Z" stroke="#6c84ee" stroke-width="1" fill="none"/><path d="M134.6 318.2L138.1 321.7" stroke="#6c84ee" stroke-width="0.8"/><path d="M181.6 312.6L181.6 320.2A7.6 7.6 0 0 1 174.0 312.6Z" stroke="#6c84ee" stroke-width="1" fill="none"/><path d="M181.6 312.6L177.8 316.4" stroke="#6c84ee" stroke-width="0.8"/><path d="M181.4 329.0L185.1 322.6A7.4 7.4 0 0 1 187.8 332.7Z" stroke="#6c84ee" stroke-width="1" fill="none"/><path d="M181.4 329.0L186.5 327.6" stroke="#6c84ee" stroke-width="0.8"/><path d="M120.6 394.8L113.8 392.3A7.2 7.2 0 0 1 123.1 388.0Z" stroke="#6c84ee" stroke-width="1" fill="none"/><path d="M120.6 394.8L118.4 390.2" stroke="#6c84ee" stroke-width="0.8"/><path d="M126.6 407.0L120.4 404.7A6.6 6.6 0 0 1 128.9 400.8Z" stroke="#6c84ee" stroke-width="1" fill="none"/><path d="M126.6 407.0L124.6 402.8" stroke="#6c84ee" stroke-width="0.8"/><path d="M160.6 393.4L159.4 400.3A7 7 0 0 1 153.7 392.2Z" stroke="#6c84ee" stroke-width="1" fill="none"/><path d="M160.6 393.4L156.5 396.2" stroke="#6c84ee" stroke-width="0.8"/><path d="M156.0 372.6L162.9 371.4A7 7 0 0 1 157.2 379.5Z" stroke="#6c84ee" stroke-width="1" fill="none"/><path d="M156.0 372.6L160.1 375.4" stroke="#6c84ee" stroke-width="0.8"/></g><g transform="translate(362.4 0)"><rect x="87.3" y="293.3" width="158.3" height="222.8" fill="none" stroke="#2c00d6" stroke-width="1.3"/><path d="M100.6 417.0L100.6 299.0L232.9 303.6L196.5 353.5L151.6 434.9" stroke="#de3a02" stroke-width="1.56" fill="none" /><path d="M104.6 302.6L226.0 307.1L191.6 355.6L130.4 464.0L104.6 454.7Z" stroke="#de3a02" stroke-width="1.56" fill="none" /><path d="M100.6 417.0L100.6 504.5L109.8 507.8L151.6 434.9" stroke="#00dede" stroke-width="1" fill="none" /><path d="M100.6 458.0L132.4 468.0" stroke="#00dede" stroke-width="1" fill="none" /><path d="M100.6 461.0L130.4 471.3" stroke="#00dede" stroke-width="1" fill="none" /><rect x="104.8" y="303.2" width="14.8" height="7.2" fill="none" stroke="#7e7e7e" stroke-width="1.1"/><rect x="107.2" y="304.6" width="10.6" height="4.2" fill="none" stroke="#7e7e7e" stroke-width="0.7"/><path d="M124.2 303.6L128.2 303.6L128.2 317.8L124.2 317.8Z" stroke="#7e7e7e" stroke-width="0.9" fill="none" /><path d="M124.2 303.6L128.2 317.8" stroke="#7e7e7e" stroke-width="0.7" fill="none" /><path d="M128.2 303.6L124.2 317.8" stroke="#7e7e7e" stroke-width="0.7" fill="none" /><rect x="130.8" y="304.4" width="5.2" height="12" rx="1.6" fill="none" stroke="#b4b4b4" stroke-width="1"/><rect x="137.6" y="304.6" width="3.6" height="2" fill="none" stroke="#b4b4b4" stroke-width="0.7"/><rect x="142.2" y="308.4" width="4.6" height="7.8" fill="none" stroke="#b4b4b4" stroke-width="0.9"/><circle cx="144.5" cy="310.4" r="1" fill="none" stroke="#b4b4b4" stroke-width="0.6"/><rect x="148.8" y="304.4" width="23" height="5.4" fill="#8a8a8a" stroke="#7e7e7e" stroke-width="0.4"/><rect x="151" y="305.4" width="2.2" height="3.2" fill="#3c3c3c"/><rect x="154.6" y="305.4" width="2.2" height="3.2" fill="#3c3c3c"/><rect x="158.2" y="305.4" width="2.2" height="3.2" fill="#3c3c3c"/><rect x="162" y="305.4" width="2.2" height="3.2" fill="#3c3c3c"/><rect x="165.6" y="305.4" width="2.2" height="3.2" fill="#3c3c3c"/><rect x="169" y="305.4" width="2.2" height="3.2" fill="#3c3c3c"/><path d="M185.00 305.8V312.8" stroke="#7e7e7e" stroke-width="1.1"/><path d="M187.05 305.8V312.8" stroke="#7e7e7e" stroke-width="1.1"/><path d="M189.10 305.8V312.8" stroke="#7e7e7e" stroke-width="1.1"/><path d="M191.15 305.8V312.8" stroke="#7e7e7e" stroke-width="1.1"/><path d="M193.20 305.8V312.8" stroke="#7e7e7e" stroke-width="1.1"/><path d="M195.25 305.8V312.8" stroke="#7e7e7e" stroke-width="1.1"/><path d="M197.30 305.8V312.8" stroke="#7e7e7e" stroke-width="1.1"/><path d="M199.35 305.8V312.8" stroke="#7e7e7e" stroke-width="1.1"/><path d="M201.40 305.8V312.8" stroke="#7e7e7e" stroke-width="1.1"/><path d="M203.45 305.8V312.8" stroke="#7e7e7e" stroke-width="1.1"/><path d="M205.50 305.8V312.8" stroke="#7e7e7e" stroke-width="1.1"/><path d="M207.55 305.8V312.8" stroke="#7e7e7e" stroke-width="1.1"/><path d="M209.60 305.8V312.8" stroke="#7e7e7e" stroke-width="1.1"/><path d="M210.4 306.6L213.4 306.4L221.0 313.6L218.8 317.6Z" stroke="#7e7e7e" stroke-width="0.5" fill="#6a6a6a" /><path d="M211.6 306.8l-2 3.6" stroke="#2a2a2a" stroke-width="0.5"/><path d="M213.3 308.6l-2 3.6" stroke="#2a2a2a" stroke-width="0.5"/><path d="M215.0 310.4l-2 3.6" stroke="#2a2a2a" stroke-width="0.5"/><path d="M216.7 312.2l-2 3.6" stroke="#2a2a2a" stroke-width="0.5"/><path d="M218.4 314.0l-2 3.6" stroke="#2a2a2a" stroke-width="0.5"/><path d="M184.0 315.4L202.0 315.4L198.0 319.6L184.0 319.6Z" stroke="#7e7e7e" stroke-width="0.8" fill="none" /><path d="M184.0 319.4L192.0 315.6L197.0 319.4L202.0 315.6" stroke="#7e7e7e" stroke-width="0.7" fill="none" /><rect x="203.6" y="316.0" width="10" height="10" transform="rotate(32 208.6 321.0)" stroke="#7e7e7e" stroke-width="1.1" fill="none"/><rect x="105" y="321.4" width="5.4" height="5" fill="none" stroke="#7e7e7e" stroke-width="1.1"/><rect x="105" y="327" width="5.4" height="5" fill="none" stroke="#7e7e7e" stroke-width="1.1"/><rect x="105" y="332.6" width="5.4" height="5" fill="none" stroke="#7e7e7e" stroke-width="1.1"/><rect x="112.4" y="327.8" width="6.8" height="6.8" fill="none" stroke="#7e7e7e" stroke-width="1"/><path d="M113.4 328.8l1.4 1.4M118.2 328.8l-1.4 1.4M113.4 333.6l1.4-1.4M118.2 333.6l-1.4-1.4" stroke="#7e7e7e" stroke-width="0.7"/><rect x="105" y="376.6" width="5.4" height="6.6" fill="none" stroke="#7e7e7e" stroke-width="1.2"/><rect x="105" y="383.6" width="5.4" height="6.6" fill="none" stroke="#7e7e7e" stroke-width="1.2"/><rect x="183.3" y="339.3" width="5" height="5" transform="rotate(30 185.8 341.8)" stroke="#7e7e7e" stroke-width="1.1" fill="none"/><path d="M183.2 339.4L184.4 341.2" stroke="#7e7e7e" stroke-width="0.8" fill="none" /><path d="M188.6 339.6L187.6 341.4" stroke="#7e7e7e" stroke-width="0.8" fill="none" /><rect x="174.2" y="347.6" width="4.4" height="4.4" transform="rotate(30 176.4 349.8)" stroke="#7e7e7e" stroke-width="1.2" fill="none"/><rect x="178.6" y="350.2" width="4.4" height="4.4" transform="rotate(30 180.8 352.4)" stroke="#7e7e7e" stroke-width="1.2" fill="none"/><rect x="172.9" y="348.2" width="11" height="6.4" transform="rotate(30 178.4 351.4)" stroke="#7e7e7e" stroke-width="1" fill="none"/><rect x="195.4" y="340.6" width="3.6" height="3.6" transform="rotate(30 197.2 342.4)" stroke="#7e7e7e" stroke-width="1.1" fill="none"/><rect x="192.8" y="345.0" width="3.6" height="3.6" transform="rotate(30 194.6 346.8)" stroke="#7e7e7e" stroke-width="1.1" fill="none"/><rect x="190.2" y="349.4" width="3.6" height="3.6" transform="rotate(30 192.0 351.2)" stroke="#7e7e7e" stroke-width="1.1" fill="none"/><rect x="191.8" y="339.6" width="5.6" height="14.4" transform="rotate(30 194.6 346.8)" stroke="#7e7e7e" stroke-width="1" fill="none"/><path d="M122.9 303.3L148.8 304.0L148.8 318.7L129.1 318.7L129.1 328.3" stroke="#de3a02" stroke-width="1.8" fill="none" /><path d="M122.9 303.3L122.9 312.0" stroke="#de3a02" stroke-width="1.44" fill="none" /><path d="M173.9 305.6L173.9 313.6" stroke="#de3a02" stroke-width="1.8" fill="none" /><path d="M183.1 314.2L221.0 314.7" stroke="#de3a02" stroke-width="1.8" fill="none" /><path d="M182.0 312.1L181.0 329.4" stroke="#de3a02" stroke-width="1.8" fill="none" /><path d="M192.0 314.8L192.0 324.4" stroke="#de3a02" stroke-width="1.8" fill="none" /><path d="M192.4 325.0L198.2 328.6" stroke="#00dede" stroke-width="1.8" fill="none" /><path d="M201.4 330.6L207.2 334.2" stroke="#00dede" stroke-width="1.8" fill="none" /><rect x="165.8" y="368.4" width="12.6" height="12.4" transform="rotate(30 172.1 374.6)" stroke="#7e7e7e" stroke-width="1.1" fill="none"/><path d="M175.2 382.6L179.8 373.8" stroke="#7e7e7e" stroke-width="0.8" fill="none" /><rect x="173.8" y="378.4" width="2.4" height="2.4" transform="rotate(30 175.0 379.6)" stroke="#7e7e7e" stroke-width="0.8" fill="none"/><rect x="153.6" y="393.6" width="3.6" height="3.6" transform="rotate(30 155.4 395.4)" stroke="#7e7e7e" stroke-width="1.1" fill="none"/><rect x="151.2" y="398.0" width="3.6" height="3.6" transform="rotate(30 153.0 399.8)" stroke="#7e7e7e" stroke-width="1.1" fill="none"/><rect x="148.8" y="402.4" width="3.6" height="3.6" transform="rotate(30 150.6 404.2)" stroke="#7e7e7e" stroke-width="1.1" fill="none"/><rect x="150.2" y="392.6" width="5.6" height="14.4" transform="rotate(30 153.0 399.8)" stroke="#7e7e7e" stroke-width="1" fill="none"/><path d="M158.2 402.5L162.8 404.5L151.6 425.0L146.3 422.3Z" stroke="#7e7e7e" stroke-width="0.5" fill="#6c6c6c" /><path d="M157.80 403.60l4.6 2" stroke="#3a3a3a" stroke-width="0.5"/><path d="M156.50 405.90l4.6 2" stroke="#3a3a3a" stroke-width="0.5"/><path d="M155.20 408.20l4.6 2" stroke="#3a3a3a" stroke-width="0.5"/><path d="M153.90 410.50l4.6 2" stroke="#3a3a3a" stroke-width="0.5"/><path d="M152.60 412.80l4.6 2" stroke="#3a3a3a" stroke-width="0.5"/><path d="M151.30 415.10l4.6 2" stroke="#3a3a3a" stroke-width="0.5"/><path d="M150.00 417.40l4.6 2" stroke="#3a3a3a" stroke-width="0.5"/><path d="M148.70 419.70l4.6 2" stroke="#3a3a3a" stroke-width="0.5"/><path d="M147.40 422.00l4.6 2" stroke="#3a3a3a" stroke-width="0.5"/><rect x="145.3" y="428.1" width="3.4" height="4.6" transform="rotate(25 147.0 430.4)" stroke="#b4b4b4" stroke-width="1" fill="none"/><rect x="134.0" y="429.0" width="8" height="4.4" transform="rotate(20 138.0 431.2)" stroke="#b4b4b4" stroke-width="0.8" fill="none"/><rect x="137.1" y="430.3" width="3" height="2.6" transform="rotate(20 138.6 431.6)" stroke="#7e7e7e" stroke-width="0.5" fill="#9a9a9a"/><rect x="114.6" y="422.6" width="10" height="4" transform="rotate(18 119.6 424.6)" stroke="#b4b4b4" stroke-width="1.2" fill="none"/><rect x="108.9" y="420.4" width="3" height="4" transform="rotate(15 110.4 422.4)" stroke="#b4b4b4" stroke-width="0.9" fill="none"/><rect x="104.8" y="415.2" width="3" height="4.2" fill="none" stroke="#b4b4b4" stroke-width="0.8"/><path d="M104.6 411.0L110.6 411.0" stroke="#b4b4b4" stroke-width="0.7" fill="none" /><path d="M104.6 355.6L164.8 356.2L185.3 367.4" stroke="#de3a02" stroke-width="1.92" fill="none" /><path d="M158.2 380.6L172.7 388.5" stroke="#de3a02" stroke-width="1.8" fill="none" /><path d="M162.2 387.2L160.2 394.4" stroke="#de3a02" stroke-width="1.68" fill="none" /><path d="M160.4 394.0L157.4 401.4" stroke="#de3a02" stroke-width="1.44" fill="none" /><path d="M104.6 402.6L112.6 403.0L112.6 411.1L129.8 417.7L125.1 430.3" stroke="#de3a02" stroke-width="1.92" fill="none" /><path d="M112.6 403.0L120.8 403.2" stroke="#de3a02" stroke-width="1.56" fill="none" /><path d="M105.0 424.2L145.0 437.5" stroke="#de3a02" stroke-width="1.8" fill="none" /><path d="M121.2 328.6L181.2 329.8L134.4 407.8L121.2 403.1Z" stroke="#00dede" stroke-width="2" fill="none" /><path d="M121.2 328.6L122.5 328.6" stroke="#f0300a" stroke-width="2"/><path d="M131.9 328.8L134.5 328.9" stroke="#f0300a" stroke-width="2"/><path d="M143.9 329.1L146.5 329.1" stroke="#f0300a" stroke-width="2"/><path d="M155.9 329.3L158.5 329.3" stroke="#f0300a" stroke-width="2"/><path d="M167.9 329.5L170.5 329.6" stroke="#f0300a" stroke-width="2"/><path d="M179.9 329.8L181.2 329.8" stroke="#f0300a" stroke-width="2"/><path d="M181.2 329.8L180.5 330.9" stroke="#f0300a" stroke-width="2"/><path d="M176.0 338.4L174.7 340.7" stroke="#f0300a" stroke-width="2"/><path d="M170.2 348.2L168.8 350.4" stroke="#f0300a" stroke-width="2"/><path d="M164.3 357.9L163.0 360.2" stroke="#f0300a" stroke-width="2"/><path d="M158.5 367.7L157.1 369.9" stroke="#f0300a" stroke-width="2"/><path d="M152.6 377.4L151.3 379.7" stroke="#f0300a" stroke-width="2"/><path d="M146.8 387.2L145.4 389.4" stroke="#f0300a" stroke-width="2"/><path d="M140.9 396.9L139.6 399.2" stroke="#f0300a" stroke-width="2"/><path d="M135.1 406.7L134.4 407.8" stroke="#f0300a" stroke-width="2"/><path d="M134.4 407.8L133.2 407.4" stroke="#f0300a" stroke-width="2"/><path d="M122.4 403.5L121.2 403.1" stroke="#f0300a" stroke-width="2"/><path d="M121.2 403.1L121.2 401.8" stroke="#f0300a" stroke-width="2"/><path d="M121.2 393.8L121.2 391.2" stroke="#f0300a" stroke-width="2"/><path d="M121.2 383.1L121.2 380.5" stroke="#f0300a" stroke-width="2"/><path d="M121.2 372.5L121.2 369.9" stroke="#f0300a" stroke-width="2"/><path d="M121.2 361.8L121.2 359.2" stroke="#f0300a" stroke-width="2"/><path d="M121.2 351.2L121.2 348.6" stroke="#f0300a" stroke-width="2"/><path d="M121.2 340.5L121.2 337.9" stroke="#f0300a" stroke-width="2"/><path d="M121.2 329.9L121.2 328.6" stroke="#f0300a" stroke-width="2"/><path d="M130.6 340.2Q130.2 336.6 135 336.2Q138.6 336.4 140.6 336.8Q142.4 334.4 146 334.6Q149.6 334.6 151 336.6Q156 336.2 159.4 337.4Q161.4 339.6 160 342Q156 343.2 151.6 341.8Q149.6 342.6 148.4 344.6L146.4 345.8Q144.6 344.4 143.4 342.6Q140.4 341.4 137.8 342.8Q132 343.4 130.6 340.2Z" stroke="#00dede" stroke-width="1" fill="none"/><path d="M134.2 359.4Q138 357.8 141.6 360Q145.8 358 148 360.6Q149.2 363.6 146.8 366.2Q144 368 142.8 371Q141.6 374.6 139.2 376.4Q137.6 379 137.4 382.4Q136 384.6 134.6 383.6Q133 380 131.6 376Q129.4 372.6 129.4 370Q131.4 367.6 134.6 367.2Q136.6 364.4 134.2 359.4Z" stroke="#00dede" stroke-width="1" fill="none"/><g transform="rotate(0 160.0 326.0)"><rect x="152.3" y="324.0" width="4" height="4.0" fill="none" stroke="#f01a00" stroke-width="1.1"/><rect x="163.7" y="324.0" width="4" height="4.0" fill="none" stroke="#f01a00" stroke-width="1.1"/><rect x="156.8" y="323.4" width="6.4" height="5.2" fill="none" stroke="#eaea00" stroke-width="1.1"/></g><rect x="106.2" y="348.2" width="11.6" height="6" fill="none" stroke="#eaea00" stroke-width="1.1"/><path d="M108 352.4L111 350.6L113 351.6L115.6 350.2" stroke="#f01a00" stroke-width="1.6" fill="none"/><path d="M109 348L112 343L115.2 348" stroke="#eaea00" stroke-width="1" fill="none"/><path d="M110 344.4l1.6-2M113.8 344.4l-1.4-2" stroke="#f01a00" stroke-width="1.1"/><path d="M114.6 362.2Q118 361.2 121.6 362.2V373.6H114.6Z" fill="none" stroke="#eaea00" stroke-width="1.1"/><path d="M110.6 364.4L113.8 367.8L110.4 370.6" stroke="#eaea00" stroke-width="1" fill="none"/><path d="M111 365.4v3.6M117.4 364.6l2 2.2l-2 2.4M119.8 371.6l1.4-1.4" stroke="#f01a00" stroke-width="1.5" fill="none"/><g transform="rotate(-66 143.2 417.0)"><rect x="135.7" y="415.1" width="4" height="3.8" fill="none" stroke="#f01a00" stroke-width="1.1"/><rect x="146.7" y="415.1" width="4" height="3.8" fill="none" stroke="#f01a00" stroke-width="1.1"/><rect x="140.0" y="414.5" width="6.4" height="5.0" fill="none" stroke="#eaea00" stroke-width="1.1"/></g><path d="M128.6 327.6L122.2 327.6A6.4 6.4 0 0 1 128.6 321.2Z" stroke="#6c84ee" stroke-width="1" fill="none"/><path d="M128.6 327.6L125.4 324.4" stroke="#6c84ee" stroke-width="0.8"/><path d="M134.6 318.2L141.6 318.2A7 7 0 0 1 134.6 325.2Z" stroke="#6c84ee" stroke-width="1" fill="none"/><path d="M134.6 318.2L138.1 321.7" stroke="#6c84ee" stroke-width="0.8"/><path d="M181.6 312.6L181.6 320.2A7.6 7.6 0 0 1 174.0 312.6Z" stroke="#6c84ee" stroke-width="1" fill="none"/><path d="M181.6 312.6L177.8 316.4" stroke="#6c84ee" stroke-width="0.8"/><path d="M181.4 329.0L185.1 322.6A7.4 7.4 0 0 1 187.8 332.7Z" stroke="#6c84ee" stroke-width="1" fill="none"/><path d="M181.4 329.0L186.5 327.6" stroke="#6c84ee" stroke-width="0.8"/><path d="M120.4 403.0L113.6 400.5A7.2 7.2 0 0 1 122.9 396.2Z" stroke="#6c84ee" stroke-width="1" fill="none"/><path d="M120.4 403.0L118.2 398.4" stroke="#6c84ee" stroke-width="0.8"/><path d="M126.6 414.6L120.4 412.3A6.6 6.6 0 0 1 128.9 408.4Z" stroke="#6c84ee" stroke-width="1" fill="none"/><path d="M126.6 414.6L124.6 410.4" stroke="#6c84ee" stroke-width="0.8"/><path d="M129.6 431.4L132.0 438.0A7 7 0 0 1 123.0 433.8Z" stroke="#6c84ee" stroke-width="1" fill="none"/><path d="M129.6 431.4L127.5 435.9" stroke="#6c84ee" stroke-width="0.8"/><path d="M151.6 379.4L158.2 377.0A7 7 0 0 1 154.0 386.0Z" stroke="#6c84ee" stroke-width="1" fill="none"/><path d="M151.6 379.4L156.1 381.5" stroke="#6c84ee" stroke-width="0.8"/><path d="M159.6 384.6L165.0 389.1A7 7 0 0 1 155.1 390.0Z" stroke="#6c84ee" stroke-width="1" fill="none"/><path d="M159.6 384.6L160.0 389.5" stroke="#6c84ee" stroke-width="0.8"/><path d="M164.4 392.4L171.0 390.0A7 7 0 0 1 166.8 399.0Z" stroke="#6c84ee" stroke-width="1" fill="none"/><path d="M164.4 392.4L168.9 394.5" stroke="#6c84ee" stroke-width="0.8"/></g><g transform="translate(543.8 0)"><rect x="87.3" y="293.3" width="158.3" height="222.8" fill="none" stroke="#2c00d6" stroke-width="1.3"/><path d="M102.2 284.0L102.2 516.5" stroke="#7e7e7e" stroke-width="1.4" fill="none" stroke-dasharray="9 1.2 1.6 1.2"/><path d="M121.3 284.0L121.3 516.5" stroke="#7e7e7e" stroke-width="1.2" fill="none" stroke-dasharray="9 1.2 1.6 1.2"/><path d="M123.6 284.0L123.6 516.5" stroke="#7e7e7e" stroke-width="1.2" fill="none" stroke-dasharray="9 1.2 1.6 1.2"/><path d="M151.5 284.0L151.5 335.0" stroke="#7e7e7e" stroke-width="0.9" fill="none" stroke-dasharray="7 1.5 1.5 1.5"/><path d="M179.5 284.0L179.5 332.0" stroke="#7e7e7e" stroke-width="0.9" fill="none" stroke-dasharray="7 1.5 1.5 1.5"/><path d="M84.0 300.7L245.0 300.9" stroke="#7e7e7e" stroke-width="0.9" fill="none" stroke-dasharray="7 1.5 1.5 1.5"/><path d="M84.0 327.1L245.2 332.7" stroke="#7e7e7e" stroke-width="0.9" fill="none" stroke-dasharray="7 1.5 1.5 1.5"/><path d="M84.0 353.5L118.0 353.6" stroke="#7e7e7e" stroke-width="0.9" fill="none" stroke-dasharray="7 1.5 1.5 1.5"/><path d="M84.0 375.5L150.8 375.7" stroke="#7e7e7e" stroke-width="0.9" fill="none" stroke-dasharray="7 1.5 1.5 1.5"/><path d="M84.0 400.4L137.0 400.6" stroke="#7e7e7e" stroke-width="0.9" fill="none" stroke-dasharray="7 1.5 1.5 1.5"/><path d="M78.3 431.6L129.6 432.6" stroke="#7e7e7e" stroke-width="0.9" fill="none" stroke-dasharray="7 1.5 1.5 1.5"/><path d="M207.4 284.0L87.3 485.3" stroke="#7e7e7e" stroke-width="0.9" fill="none" stroke-dasharray="7 1.5 1.5 1.5"/><path d="M243.7 284.0L196.5 356.0L150.0 440.0" stroke="#7e7e7e" stroke-width="0.9" fill="none" stroke-dasharray="7 1.5 1.5 1.5"/><path d="M187.0 335.4L241.4 365.6" stroke="#7e7e7e" stroke-width="0.9" fill="none" stroke-dasharray="7 1.5 1.5 1.5"/><path d="M186.0 368.2L224.8 391.3" stroke="#7e7e7e" stroke-width="0.9" fill="none" stroke-dasharray="7 1.5 1.5 1.5"/><path d="M175.0 389.8L212.4 412.2" stroke="#7e7e7e" stroke-width="0.9" fill="none" stroke-dasharray="7 1.5 1.5 1.5"/><path d="M152.3 412.0L197.6 436.6" stroke="#7e7e7e" stroke-width="0.9" fill="none" stroke-dasharray="7 1.5 1.5 1.5"/><path d="M144.7 448.3L178.7 466.5" stroke="#7e7e7e" stroke-width="0.9" fill="none" stroke-dasharray="7 1.5 1.5 1.5"/><path d="M131.1 466.5L158.3 475.5" stroke="#7e7e7e" stroke-width="0.9" fill="none" stroke-dasharray="7 1.5 1.5 1.5"/><path d="M74.5 446.4L101.0 457.2" stroke="#7e7e7e" stroke-width="0.9" fill="none" stroke-dasharray="7 1.5 1.5 1.5"/><path d="M100.4 418.0L100.4 299.2L231.8 303.7L196.5 353.5L151.0 435.4" stroke="#de3a02" stroke-width="1.68" fill="none" /><path d="M104.2 302.8L226.0 307.3L191.6 355.6L130.4 462.7L104.2 455.0Z" stroke="#de3a02" stroke-width="1.68" fill="none" /><path d="M100.4 418.0L100.4 504.2L110.0 507.6L151.0 435.4" stroke="#00dede" stroke-width="1" fill="none" /><path d="M100.4 457.4L132.4 468.0" stroke="#00dede" stroke-width="1" fill="none" /><path d="M100.4 461.0L130.4 471.3" stroke="#00dede" stroke-width="1" fill="none" /><rect x="104.8" y="303.8" width="14" height="6.6" fill="none" stroke="#7e7e7e" stroke-width="1"/><rect x="129.6" y="304.2" width="4.6" height="11" rx="1.6" fill="none" stroke="#b4b4b4" stroke-width="1"/><rect x="137.6" y="304.6" width="3.6" height="2" fill="none" stroke="#b4b4b4" stroke-width="0.7"/><rect x="146.6" y="308.4" width="4.2" height="8" fill="none" stroke="#b4b4b4" stroke-width="0.9"/><rect x="152.6" y="304.6" width="22.4" height="5.4" fill="#808080" stroke="#7e7e7e" stroke-width="0.4"/><rect x="155" y="305.6" width="2.2" height="3.2" fill="#3c3c3c"/><rect x="159" y="305.6" width="2.2" height="3.2" fill="#3c3c3c"/><rect x="163" y="305.6" width="2.2" height="3.2" fill="#3c3c3c"/><rect x="167" y="305.6" width="2.2" height="3.2" fill="#3c3c3c"/><rect x="171" y="305.6" width="2.2" height="3.2" fill="#3c3c3c"/><rect x="105" y="321.8" width="5.6" height="4.8" fill="none" stroke="#7e7e7e" stroke-width="1.1"/><rect x="105" y="327" width="5.6" height="4.8" fill="none" stroke="#7e7e7e" stroke-width="1.1"/><rect x="105" y="332" width="5.6" height="4.8" fill="none" stroke="#7e7e7e" stroke-width="1.1"/><rect x="112.4" y="329.4" width="5.2" height="5.2" fill="none" stroke="#7e7e7e" stroke-width="1"/><rect x="105" y="376.4" width="5.6" height="6.4" fill="none" stroke="#7e7e7e" stroke-width="1.2"/><rect x="105" y="383" width="5.6" height="6.4" fill="none" stroke="#7e7e7e" stroke-width="1.2"/><rect x="183.3" y="339.7" width="5" height="5" transform="rotate(30 185.8 342.2)" stroke="#7e7e7e" stroke-width="1.1" fill="none"/><rect x="174.4" y="348.4" width="4.4" height="4.4" transform="rotate(30 176.6 350.6)" stroke="#7e7e7e" stroke-width="1.2" fill="none"/><rect x="178.8" y="351.0" width="4.4" height="4.4" transform="rotate(30 181.0 353.2)" stroke="#7e7e7e" stroke-width="1.2" fill="none"/><rect x="173.2" y="348.8" width="11" height="6.4" transform="rotate(30 178.7 352.0)" stroke="#7e7e7e" stroke-width="1" fill="none"/><rect x="194.6" y="341.2" width="3.6" height="3.6" transform="rotate(30 196.4 343.0)" stroke="#7e7e7e" stroke-width="1.1" fill="none"/><rect x="192.0" y="345.7" width="3.6" height="3.6" transform="rotate(30 193.8 347.5)" stroke="#7e7e7e" stroke-width="1.1" fill="none"/><rect x="189.4" y="350.2" width="3.6" height="3.6" transform="rotate(30 191.2 352.0)" stroke="#7e7e7e" stroke-width="1.1" fill="none"/><rect x="191.0" y="340.3" width="5.6" height="14.4" transform="rotate(30 193.8 347.5)" stroke="#7e7e7e" stroke-width="1" fill="none"/><rect x="198.6" y="307.6" width="12.6" height="14.2" fill="none" stroke="#7e7e7e" stroke-width="1"/><rect x="206.6" y="309.2" width="3.4" height="3" fill="none" stroke="#7e7e7e" stroke-width="0.6"/><rect x="123.8" y="334" width="5" height="18" fill="#404040" stroke="#7e7e7e" stroke-width="0.6"/><path d="M123.8 336.00H128.8" stroke="#7e7e7e" stroke-width="0.8"/><path d="M123.8 338.00H128.8" stroke="#7e7e7e" stroke-width="0.8"/><path d="M123.8 340.00H128.8" stroke="#7e7e7e" stroke-width="0.8"/><path d="M123.8 342.00H128.8" stroke="#7e7e7e" stroke-width="0.8"/><path d="M123.8 344.00H128.8" stroke="#7e7e7e" stroke-width="0.8"/><path d="M123.8 346.00H128.8" stroke="#7e7e7e" stroke-width="0.8"/><path d="M123.8 348.00H128.8" stroke="#7e7e7e" stroke-width="0.8"/><path d="M123.8 350.00H128.8" stroke="#7e7e7e" stroke-width="0.8"/><rect x="129" y="347.6" width="9.6" height="6.6" fill="#404040" stroke="#7e7e7e" stroke-width="0.6"/><path d="M130.60 347.6V354.20000000000005" stroke="#7e7e7e" stroke-width="0.8"/><path d="M132.20 347.6V354.20000000000005" stroke="#7e7e7e" stroke-width="0.8"/><path d="M133.80 347.6V354.20000000000005" stroke="#7e7e7e" stroke-width="0.8"/><path d="M135.40 347.6V354.20000000000005" stroke="#7e7e7e" stroke-width="0.8"/><path d="M137.00 347.6V354.20000000000005" stroke="#7e7e7e" stroke-width="0.8"/><rect x="123.8" y="379.4" width="5" height="21" fill="#404040" stroke="#7e7e7e" stroke-width="0.6"/><path d="M123.8 381.50H128.8" stroke="#7e7e7e" stroke-width="0.8"/><path d="M123.8 383.60H128.8" stroke="#7e7e7e" stroke-width="0.8"/><path d="M123.8 385.70H128.8" stroke="#7e7e7e" stroke-width="0.8"/><path d="M123.8 387.80H128.8" stroke="#7e7e7e" stroke-width="0.8"/><path d="M123.8 389.90H128.8" stroke="#7e7e7e" stroke-width="0.8"/><path d="M123.8 392.00H128.8" stroke="#7e7e7e" stroke-width="0.8"/><path d="M123.8 394.10H128.8" stroke="#7e7e7e" stroke-width="0.8"/><path d="M123.8 396.20H128.8" stroke="#7e7e7e" stroke-width="0.8"/><path d="M123.8 398.30H128.8" stroke="#7e7e7e" stroke-width="0.8"/><rect x="164.9" y="368.5" width="12.6" height="12.4" transform="rotate(30 171.2 374.7)" stroke="#7e7e7e" stroke-width="1.1" fill="none"/><path d="M174.4 382.6L179.0 373.8" stroke="#7e7e7e" stroke-width="0.8" fill="none" /><rect x="154.3" y="389.5" width="5" height="5" transform="rotate(30 156.8 392.0)" stroke="#7e7e7e" stroke-width="1.1" fill="none"/><rect x="165.0" y="389.6" width="3.6" height="3.6" transform="rotate(30 166.8 391.4)" stroke="#7e7e7e" stroke-width="1.1" fill="none"/><rect x="162.6" y="394.0" width="3.6" height="3.6" transform="rotate(30 164.4 395.8)" stroke="#7e7e7e" stroke-width="1.1" fill="none"/><rect x="160.2" y="398.4" width="3.6" height="3.6" transform="rotate(30 162.0 400.2)" stroke="#7e7e7e" stroke-width="1.1" fill="none"/><rect x="161.6" y="388.6" width="5.6" height="14.4" transform="rotate(30 164.4 395.8)" stroke="#7e7e7e" stroke-width="1" fill="none"/><rect x="151.3" y="402.1" width="4.6" height="4.2" transform="rotate(30 153.6 404.2)" stroke="#7e7e7e" stroke-width="1" fill="none"/><path d="M128.9 303.6L152.3 304.4L152.3 318.8L128.9 318.8L128.9 328.0" stroke="#de3a02" stroke-width="1.8" fill="none" /><path d="M190.8 306.7L190.8 323.3" stroke="#de3a02" stroke-width="1.8" fill="none" /><path d="M178.6 310.0L178.6 323.6" stroke="#de3a02" stroke-width="1.44" fill="none" /><path d="M191.6 324.0L198.0 328.0" stroke="#00dede" stroke-width="1.8" fill="none" /><path d="M201.2 330.0L207.4 333.9" stroke="#00dede" stroke-width="1.8" fill="none" /><path d="M104.2 355.0L162.9 356.5L185.5 367.9" stroke="#de3a02" stroke-width="1.92" fill="none" /><path d="M158.3 382.0L173.5 388.3" stroke="#de3a02" stroke-width="1.68" fill="none" /><path d="M104.2 403.8L111.5 403.8L111.5 410.6" stroke="#de3a02" stroke-width="1.8" fill="none" /><path d="M105.5 422.7L117.6 431.0L124.4 422.7" stroke="#de3a02" stroke-width="1.8" fill="none" /><path d="M111.5 410.6L124.0 416.0" stroke="#de3a02" stroke-width="1.44" fill="none" /><path d="M128.9 328.2L172.0 329.7L175.7 337.0L137.2 401.1L123.6 403.4" stroke="#00dede" stroke-width="1.1" fill="none" /><path d="M120.6 330.9L120.6 403.4L123.6 403.4" stroke="#00dede" stroke-width="1.1" fill="none" /><g transform="rotate(0 184.0 316.6)"><rect x="179.3" y="309.1" width="9.4" height="3.6" fill="none" stroke="#f01a00" stroke-width="1.2"/><rect x="179.3" y="320.5" width="9.4" height="3.6" fill="none" stroke="#f01a00" stroke-width="1.2"/><path d="M184.0 309.1V324.1" stroke="#f01a00" stroke-width="1"/><rect x="178.5" y="313.0" width="11.0" height="7.2" fill="none" stroke="#eaea00" stroke-width="1.3"/><path d="M184.0 313.0V320.2" stroke="#eaea00" stroke-width="1.2"/></g><g transform="rotate(28 144.0 414.6)"><rect x="139.3" y="407.1" width="9.4" height="3.6" fill="none" stroke="#f01a00" stroke-width="1.2"/><rect x="139.3" y="418.5" width="9.4" height="3.6" fill="none" stroke="#f01a00" stroke-width="1.2"/><path d="M144.0 407.1V422.1" stroke="#f01a00" stroke-width="1"/><rect x="138.5" y="411.0" width="11.0" height="7.2" fill="none" stroke="#eaea00" stroke-width="1.3"/><path d="M144.0 411.0V418.2" stroke="#eaea00" stroke-width="1.2"/></g><rect x="106.2" y="348.4" width="12" height="5.8" rx="2" fill="none" stroke="#eaea00" stroke-width="1.2"/><path d="M108 352.6L111 350.8L113 351.8L115.6 350.4" stroke="#f01a00" stroke-width="1.6" fill="none"/><path d="M109 348.2L112 343.4L115.2 348.2" stroke="#eaea00" stroke-width="1" fill="none"/><path d="M110 344.4l1.6-2M113.8 344.4l-1.4-2" stroke="#f01a00" stroke-width="1.1"/><rect x="114.6" y="362" width="6" height="11.8" fill="none" stroke="#eaea00" stroke-width="1.1"/><path d="M110.6 364.4L113.8 367.8L110.4 370.6" stroke="#eaea00" stroke-width="1" fill="none"/><path d="M111 365.4v3.6M117.4 364.6l2 2.2l-2 2.4" stroke="#f01a00" stroke-width="1.5" fill="none"/><path d="M128.4 327.0L122.8 327.0A5.6 5.6 0 0 1 128.4 321.4Z" stroke="#6c84ee" stroke-width="1" fill="none"/><path d="M128.4 327.0L125.6 324.2" stroke="#6c84ee" stroke-width="0.8"/><path d="M134.6 318.0L141.6 318.0A7 7 0 0 1 134.6 325.0Z" stroke="#6c84ee" stroke-width="1" fill="none"/><path d="M134.6 318.0L138.1 321.5" stroke="#6c84ee" stroke-width="0.8"/><path d="M119.4 403.2L113.2 400.9A6.6 6.6 0 0 1 121.7 397.0Z" stroke="#6c84ee" stroke-width="1" fill="none"/><path d="M119.4 403.2L117.4 399.0" stroke="#6c84ee" stroke-width="0.8"/><path d="M151.0 378.6L158.3 377.3A7.4 7.4 0 0 1 152.3 385.9Z" stroke="#6c84ee" stroke-width="1" fill="none"/><path d="M151.0 378.6L155.3 381.6" stroke="#6c84ee" stroke-width="0.8"/><path d="M118.0 412.0L112.4 409.9A6 6 0 0 1 120.1 406.4Z" stroke="#6c84ee" stroke-width="1" fill="none"/><path d="M118.0 412.0L116.2 408.2" stroke="#6c84ee" stroke-width="0.8"/><path d="M121.4 436.0L123.2 441.1A5.4 5.4 0 0 1 116.3 437.8Z" stroke="#6c84ee" stroke-width="1" fill="none"/><path d="M121.4 436.0L119.8 439.5" stroke="#6c84ee" stroke-width="0.8"/><rect x="130.4" y="433.7" width="16" height="5" transform="rotate(20 138.4 436.2)" stroke="#7e7e7e" stroke-width="0.9" fill="none"/><rect x="134.2" y="433.9" width="3.6" height="3" transform="rotate(20 136.0 435.4)" stroke="#7e7e7e" stroke-width="0.5" fill="#a0a0a0"/><rect x="142.6" y="436.0" width="3.6" height="4.4" transform="rotate(20 144.4 438.2)" stroke="#b4b4b4" stroke-width="0.9" fill="none"/><rect x="120.6" y="417.9" width="4" height="9" transform="rotate(25 122.6 422.4)" stroke="#b4b4b4" stroke-width="0.9" fill="none"/><rect x="104.8" y="415" width="2.8" height="4" fill="none" stroke="#b4b4b4" stroke-width="0.8"/></g><g transform="translate(725.1 0)"><rect x="87.3" y="293.3" width="158.3" height="222.8" fill="none" stroke="#2c00d6" stroke-width="1.3"/><path d="M102.2 284.0L102.2 516.5" stroke="#7e7e7e" stroke-width="1.4" fill="none" stroke-dasharray="9 1.2 1.6 1.2"/><path d="M121.3 284.0L121.3 516.5" stroke="#7e7e7e" stroke-width="1.2" fill="none" stroke-dasharray="9 1.2 1.6 1.2"/><path d="M125.6 284.0L125.6 516.5" stroke="#7e7e7e" stroke-width="1.2" fill="none" stroke-dasharray="9 1.2 1.6 1.2"/><path d="M151.5 284.0L151.5 335.0" stroke="#7e7e7e" stroke-width="0.9" fill="none" stroke-dasharray="7 1.5 1.5 1.5"/><path d="M179.5 284.0L179.5 332.0" stroke="#7e7e7e" stroke-width="0.9" fill="none" stroke-dasharray="7 1.5 1.5 1.5"/><path d="M84.0 300.7L245.0 300.9" stroke="#7e7e7e" stroke-width="0.9" fill="none" stroke-dasharray="7 1.5 1.5 1.5"/><path d="M84.0 327.1L245.2 332.7" stroke="#7e7e7e" stroke-width="0.9" fill="none" stroke-dasharray="7 1.5 1.5 1.5"/><path d="M84.0 353.5L118.0 353.6" stroke="#7e7e7e" stroke-width="0.9" fill="none" stroke-dasharray="7 1.5 1.5 1.5"/><path d="M84.0 375.5L150.8 375.7" stroke="#7e7e7e" stroke-width="0.9" fill="none" stroke-dasharray="7 1.5 1.5 1.5"/><path d="M84.0 400.4L137.0 400.6" stroke="#7e7e7e" stroke-width="0.9" fill="none" stroke-dasharray="7 1.5 1.5 1.5"/><path d="M79.0 435.0L118.2 436.0" stroke="#7e7e7e" stroke-width="0.9" fill="none" stroke-dasharray="7 1.5 1.5 1.5"/><path d="M207.4 284.0L87.3 485.3" stroke="#7e7e7e" stroke-width="0.9" fill="none" stroke-dasharray="7 1.5 1.5 1.5"/><path d="M243.7 284.0L196.5 356.0L150.0 440.0" stroke="#7e7e7e" stroke-width="0.9" fill="none" stroke-dasharray="7 1.5 1.5 1.5"/><path d="M215.7 287.0L94.8 488.4" stroke="#7e7e7e" stroke-width="0.9" fill="none" stroke-dasharray="7 1.5 1.5 1.5"/><path d="M187.0 335.4L241.4 365.6" stroke="#7e7e7e" stroke-width="0.9" fill="none" stroke-dasharray="7 1.5 1.5 1.5"/><path d="M186.0 368.2L224.8 391.3" stroke="#7e7e7e" stroke-width="0.9" fill="none" stroke-dasharray="7 1.5 1.5 1.5"/><path d="M175.0 389.8L212.4 412.2" stroke="#7e7e7e" stroke-width="0.9" fill="none" stroke-dasharray="7 1.5 1.5 1.5"/><path d="M152.3 412.0L197.6 436.6" stroke="#7e7e7e" stroke-width="0.9" fill="none" stroke-dasharray="7 1.5 1.5 1.5"/><path d="M144.7 448.3L178.7 466.5" stroke="#7e7e7e" stroke-width="0.9" fill="none" stroke-dasharray="7 1.5 1.5 1.5"/><path d="M131.1 466.5L158.3 475.5" stroke="#7e7e7e" stroke-width="0.9" fill="none" stroke-dasharray="7 1.5 1.5 1.5"/><path d="M74.5 446.4L101.0 457.2" stroke="#7e7e7e" stroke-width="0.9" fill="none" stroke-dasharray="7 1.5 1.5 1.5"/><path d="M100.8 456.6L100.8 299.2L231.8 303.7L196.5 353.5L132.6 468.0" stroke="#de3a02" stroke-width="1.68" fill="none" /><path d="M104.6 455.1L104.6 302.8L226.0 307.3" stroke="#de3a02" stroke-width="1.68" fill="none" /><path d="M104.6 455.1L130.3 463.4" stroke="#de3a02" stroke-width="1.68" fill="none" /><path d="M226.0 307.3L191.6 355.6L130.3 463.4" stroke="#b4600c" stroke-width="1.3" fill="none" /><path d="M119.6 303.4L175.6 305.4" stroke="#b4600c" stroke-width="1" fill="none" /><path d="M119.6 303.4L119.6 400.0" stroke="#b4600c" stroke-width="1" fill="none" /><path d="M100.2 457.4L131.1 468.7" stroke="#00dede" stroke-width="1" fill="none" /><path d="M100.9 461.9L129.6 471.8" stroke="#00dede" stroke-width="1" fill="none" /><path d="M100.4 457.4L100.9 504.2L109.9 507.6L131.4 468.7" stroke="#00dede" stroke-width="1" fill="none" /><rect x="104.8" y="303.8" width="14" height="6.6" fill="none" stroke="#7e7e7e" stroke-width="1"/><rect x="129.6" y="304.2" width="4.6" height="11" rx="1.6" fill="none" stroke="#b4b4b4" stroke-width="1"/><rect x="137.6" y="304.6" width="3.6" height="2" fill="none" stroke="#b4b4b4" stroke-width="0.7"/><rect x="146.6" y="308.4" width="4.2" height="8" fill="none" stroke="#b4b4b4" stroke-width="0.9"/><rect x="152.6" y="304.6" width="22.4" height="5.4" fill="#808080" stroke="#7e7e7e" stroke-width="0.4"/><rect x="155" y="305.6" width="2.2" height="3.2" fill="#3c3c3c"/><rect x="159" y="305.6" width="2.2" height="3.2" fill="#3c3c3c"/><rect x="163" y="305.6" width="2.2" height="3.2" fill="#3c3c3c"/><rect x="167" y="305.6" width="2.2" height="3.2" fill="#3c3c3c"/><rect x="171" y="305.6" width="2.2" height="3.2" fill="#3c3c3c"/><rect x="105" y="321.8" width="5.6" height="4.8" fill="none" stroke="#7e7e7e" stroke-width="1.1"/><rect x="105" y="327" width="5.6" height="4.8" fill="none" stroke="#7e7e7e" stroke-width="1.1"/><rect x="105" y="332" width="5.6" height="4.8" fill="none" stroke="#7e7e7e" stroke-width="1.1"/><rect x="112.4" y="329.4" width="5.2" height="5.2" fill="none" stroke="#7e7e7e" stroke-width="1"/><rect x="105" y="376.4" width="5.6" height="6.4" fill="none" stroke="#7e7e7e" stroke-width="1.2"/><rect x="105" y="383" width="5.6" height="6.4" fill="none" stroke="#7e7e7e" stroke-width="1.2"/><rect x="183.3" y="339.7" width="5" height="5" transform="rotate(30 185.8 342.2)" stroke="#7e7e7e" stroke-width="1.1" fill="none"/><rect x="174.4" y="348.4" width="4.4" height="4.4" transform="rotate(30 176.6 350.6)" stroke="#7e7e7e" stroke-width="1.2" fill="none"/><rect x="178.8" y="351.0" width="4.4" height="4.4" transform="rotate(30 181.0 353.2)" stroke="#7e7e7e" stroke-width="1.2" fill="none"/><rect x="173.2" y="348.8" width="11" height="6.4" transform="rotate(30 178.7 352.0)" stroke="#7e7e7e" stroke-width="1" fill="none"/><rect x="194.6" y="341.2" width="3.6" height="3.6" transform="rotate(30 196.4 343.0)" stroke="#7e7e7e" stroke-width="1.1" fill="none"/><rect x="192.0" y="345.7" width="3.6" height="3.6" transform="rotate(30 193.8 347.5)" stroke="#7e7e7e" stroke-width="1.1" fill="none"/><rect x="189.4" y="350.2" width="3.6" height="3.6" transform="rotate(30 191.2 352.0)" stroke="#7e7e7e" stroke-width="1.1" fill="none"/><rect x="191.0" y="340.3" width="5.6" height="14.4" transform="rotate(30 193.8 347.5)" stroke="#7e7e7e" stroke-width="1" fill="none"/><path d="M198.6 305.6L210.6 305.6L210.6 321.6L198.6 321.6Z" stroke="#7e7e7e" stroke-width="1" fill="none" /><path d="M198.6 305.6L210.6 321.6" stroke="#7e7e7e" stroke-width="0.8" fill="none" /><path d="M210.6 305.6L198.6 321.6" stroke="#7e7e7e" stroke-width="0.8" fill="none" /><rect x="121.6" y="327.2" width="8" height="18.6" fill="#404040" stroke="#7e7e7e" stroke-width="0.6"/><path d="M121.6 329.06H129.6" stroke="#7e7e7e" stroke-width="0.8"/><path d="M121.6 330.92H129.6" stroke="#7e7e7e" stroke-width="0.8"/><path d="M121.6 332.78H129.6" stroke="#7e7e7e" stroke-width="0.8"/><path d="M121.6 334.64H129.6" stroke="#7e7e7e" stroke-width="0.8"/><path d="M121.6 336.50H129.6" stroke="#7e7e7e" stroke-width="0.8"/><path d="M121.6 338.36H129.6" stroke="#7e7e7e" stroke-width="0.8"/><path d="M121.6 340.22H129.6" stroke="#7e7e7e" stroke-width="0.8"/><path d="M121.6 342.08H129.6" stroke="#7e7e7e" stroke-width="0.8"/><path d="M121.6 343.94H129.6" stroke="#7e7e7e" stroke-width="0.8"/><rect x="128.8" y="347" width="9.8" height="7.2" fill="#404040" stroke="#7e7e7e" stroke-width="0.6"/><path d="M130.43 347V354.2" stroke="#7e7e7e" stroke-width="0.8"/><path d="M132.07 347V354.2" stroke="#7e7e7e" stroke-width="0.8"/><path d="M133.70 347V354.2" stroke="#7e7e7e" stroke-width="0.8"/><path d="M135.33 347V354.2" stroke="#7e7e7e" stroke-width="0.8"/><path d="M136.97 347V354.2" stroke="#7e7e7e" stroke-width="0.8"/><rect x="121.6" y="376.4" width="8.6" height="25.4" fill="#404040" stroke="#7e7e7e" stroke-width="0.6"/><path d="M121.6 378.35H130.2" stroke="#7e7e7e" stroke-width="0.8"/><path d="M121.6 380.31H130.2" stroke="#7e7e7e" stroke-width="0.8"/><path d="M121.6 382.26H130.2" stroke="#7e7e7e" stroke-width="0.8"/><path d="M121.6 384.22H130.2" stroke="#7e7e7e" stroke-width="0.8"/><path d="M121.6 386.17H130.2" stroke="#7e7e7e" stroke-width="0.8"/><path d="M121.6 388.12H130.2" stroke="#7e7e7e" stroke-width="0.8"/><path d="M121.6 390.08H130.2" stroke="#7e7e7e" stroke-width="0.8"/><path d="M121.6 392.03H130.2" stroke="#7e7e7e" stroke-width="0.8"/><path d="M121.6 393.98H130.2" stroke="#7e7e7e" stroke-width="0.8"/><path d="M121.6 395.94H130.2" stroke="#7e7e7e" stroke-width="0.8"/><path d="M121.6 397.89H130.2" stroke="#7e7e7e" stroke-width="0.8"/><path d="M121.6 399.85H130.2" stroke="#7e7e7e" stroke-width="0.8"/><rect x="165.6" y="369.2" width="5" height="5" transform="rotate(30 168.1 371.7)" stroke="#7e7e7e" stroke-width="1.1" fill="none"/><rect x="177.8" y="369.4" width="3.6" height="3.6" transform="rotate(30 179.6 371.2)" stroke="#7e7e7e" stroke-width="1.1" fill="none"/><rect x="175.4" y="373.7" width="3.6" height="3.6" transform="rotate(30 177.2 375.5)" stroke="#7e7e7e" stroke-width="1.1" fill="none"/><rect x="173.0" y="378.0" width="3.6" height="3.6" transform="rotate(30 174.8 379.8)" stroke="#7e7e7e" stroke-width="1.1" fill="none"/><rect x="174.4" y="368.3" width="5.6" height="14.4" transform="rotate(30 177.2 375.5)" stroke="#7e7e7e" stroke-width="1" fill="none"/><path d="M167.6 389.8L172.6 392.0L161.0 413.4L156.0 411.0Z" stroke="#7e7e7e" stroke-width="0.5" fill="#8a8a8a" /><path d="M167.0 391.0l4.6 2" stroke="#d8d8d8" stroke-width="0.5"/><path d="M165.6 393.6l4.6 2" stroke="#d8d8d8" stroke-width="0.5"/><path d="M164.2 396.2l4.6 2" stroke="#d8d8d8" stroke-width="0.5"/><path d="M162.8 398.8l4.6 2" stroke="#d8d8d8" stroke-width="0.5"/><path d="M161.4 401.4l4.6 2" stroke="#d8d8d8" stroke-width="0.5"/><path d="M160.0 404.0l4.6 2" stroke="#d8d8d8" stroke-width="0.5"/><path d="M158.6 406.6l4.6 2" stroke="#d8d8d8" stroke-width="0.5"/><path d="M157.2 409.2l4.6 2" stroke="#d8d8d8" stroke-width="0.5"/><rect x="133.6" y="422.2" width="13" height="13" transform="rotate(30 140.1 428.7)" stroke="#7e7e7e" stroke-width="1.1" fill="none"/><path d="M143.4 436.6L148.0 427.8" stroke="#7e7e7e" stroke-width="0.8" fill="none" /><path d="M137.9 415.9L143.4 418.6" stroke="#00dede" stroke-width="1.8" fill="none" /><path d="M146.8 420.2L152.2 422.8" stroke="#00dede" stroke-width="1.8" fill="none" /><path d="M128.9 303.6L152.3 304.4L152.3 318.8L128.9 318.8L128.9 328.0" stroke="#de3a02" stroke-width="1.8" fill="none" /><path d="M177.0 306.0L191.5 306.5" stroke="#de3a02" stroke-width="1.56" fill="none" /><path d="M191.5 306.7L191.5 324.1L197.5 327.9" stroke="#00dede" stroke-width="1.6" fill="none" /><path d="M200.6 329.8L206.6 333.2" stroke="#00dede" stroke-width="1.8" fill="none" /><path d="M104.6 355.0L163.6 356.6L185.5 367.9" stroke="#de3a02" stroke-width="1.92" fill="none" /><path d="M128.1 436.3L140.1 443.8" stroke="#de3a02" stroke-width="2.16" fill="none" /><path d="M104.6 421.1L115.2 430.2" stroke="#de3a02" stroke-width="1.8" fill="none" /><path d="M110.7 403.0L113.7 412.1" stroke="#de3a02" stroke-width="1.8" fill="none" /><path d="M104.6 402.6L110.7 403.0" stroke="#de3a02" stroke-width="1.68" fill="none" /><path d="M121.3 416.6L126.5 419.6L122.0 428.7L116.8 426.4Z" stroke="#b4b4b4" stroke-width="1" fill="none" /><path d="M126.5 419.6L122.0 428.7" stroke="#de3a02" stroke-width="1.68" fill="none" /><path d="M128.8 328.6L172.6 330.6L175.6 337.7L136.4 400.4L123.5 403.4" stroke="#00dede" stroke-width="1.2" fill="none" /><path d="M87.3 427.2L104.0 427.2L106.2 429.0L106.2 432.4L104.0 434.0" stroke="#d09000" stroke-width="1.3" fill="none" /><path d="M87.3 438.5L110.7 438.5L139.4 445.3" stroke="#b4600c" stroke-width="1.2" fill="none" /><circle cx="110.7" cy="438.5" r="2" fill="none" stroke="#b4600c" stroke-width="1"/><path d="M87.3 443.5L106.2 443.5" stroke="#20b0b0" stroke-width="1" fill="none" /><path d="M131.8 332.4L142.4 346.0" stroke="#1010e8" stroke-width="1.1" fill="none" /><path d="M168.8 334.7L151.5 349.0" stroke="#1010e8" stroke-width="1.1" fill="none" /><rect x="142.4" y="345.2" width="18.1" height="9.8" fill="none" stroke="#1010e8" stroke-width="1.2"/><circle cx="146.2" cy="350" r="3" fill="none" stroke="#1010e8" stroke-width="1.1"/><rect x="138.6" y="356.6" width="18.2" height="10.5" fill="none" stroke="#1010e8" stroke-width="1.2"/><circle cx="142.9" cy="361.6" r="2.8" fill="none" stroke="#1010e8" stroke-width="1.1"/><path d="M126.5 361.9L138.6 358.8" stroke="#1010e8" stroke-width="1.1" fill="none" /><path d="M135.6 392.0L140.1 370.9" stroke="#1010e8" stroke-width="1.1" fill="none" /><path d="M147.0 358.4L154.4 363.0" stroke="#1010e8" stroke-width="1" fill="none" /><path d="M161.8 354.0L164.0 351.4" stroke="#1010e8" stroke-width="1" fill="none" /><circle cx="151.5" cy="329.6" r="1.4" fill="none" stroke="#1010e8" stroke-width="0.9"/><circle cx="123.4" cy="356.2" r="1.2" fill="none" stroke="#1010e8" stroke-width="0.9"/><circle cx="136.4" cy="400.6" r="1.6" fill="#1010e8"/><g transform="rotate(0 183.6 316.6)"><rect x="178.9" y="309.1" width="9.4" height="3.6" fill="none" stroke="#f01a00" stroke-width="1.2"/><rect x="178.9" y="320.5" width="9.4" height="3.6" fill="none" stroke="#f01a00" stroke-width="1.2"/><path d="M183.6 309.1V324.1" stroke="#f01a00" stroke-width="1"/><rect x="178.1" y="313.0" width="11.0" height="7.2" fill="none" stroke="#eaea00" stroke-width="1.3"/><path d="M183.6 313.0V320.2" stroke="#eaea00" stroke-width="1.2"/></g><g transform="rotate(30 152.2 387.5)"><rect x="147.5" y="380.0" width="9.4" height="3.6" fill="none" stroke="#f01a00" stroke-width="1.2"/><rect x="147.5" y="391.4" width="9.4" height="3.6" fill="none" stroke="#f01a00" stroke-width="1.2"/><path d="M152.2 380.0V395.0" stroke="#f01a00" stroke-width="1"/><rect x="146.7" y="383.9" width="11.0" height="7.2" fill="none" stroke="#eaea00" stroke-width="1.3"/><path d="M152.2 383.9V391.1" stroke="#eaea00" stroke-width="1.2"/></g><rect x="106.2" y="348.4" width="12" height="5.8" rx="2" fill="none" stroke="#eaea00" stroke-width="1.2"/><path d="M108 352.6L111 350.8L113 351.8L115.6 350.4" stroke="#f01a00" stroke-width="1.6" fill="none"/><path d="M109 348.2L112 343.4L115.2 348.2" stroke="#eaea00" stroke-width="1" fill="none"/><path d="M110 344.4l1.6-2M113.8 344.4l-1.4-2" stroke="#f01a00" stroke-width="1.1"/><rect x="114.6" y="362" width="6" height="11.8" fill="none" stroke="#eaea00" stroke-width="1.1"/><path d="M110.6 364.4L113.8 367.8L110.4 370.6" stroke="#eaea00" stroke-width="1" fill="none"/><path d="M111 365.4v3.6M117.4 364.6l2 2.2l-2 2.4" stroke="#f01a00" stroke-width="1.5" fill="none"/><path d="M128.4 327.0L122.8 327.0A5.6 5.6 0 0 1 128.4 321.4Z" stroke="#6c84ee" stroke-width="1" fill="none"/><path d="M128.4 327.0L125.6 324.2" stroke="#6c84ee" stroke-width="0.8"/><path d="M134.6 318.0L141.6 318.0A7 7 0 0 1 134.6 325.0Z" stroke="#6c84ee" stroke-width="1" fill="none"/><path d="M134.6 318.0L138.1 321.5" stroke="#6c84ee" stroke-width="0.8"/><path d="M119.4 403.2L113.2 400.9A6.6 6.6 0 0 1 121.7 397.0Z" stroke="#6c84ee" stroke-width="1" fill="none"/><path d="M119.4 403.2L117.4 399.0" stroke="#6c84ee" stroke-width="0.8"/><path d="M118.0 412.0L112.4 409.9A6 6 0 0 1 120.1 406.4Z" stroke="#6c84ee" stroke-width="1" fill="none"/><path d="M118.0 412.0L116.2 408.2" stroke="#6c84ee" stroke-width="0.8"/><path d="M123.6 437.0L125.4 442.1A5.4 5.4 0 0 1 118.5 438.8Z" stroke="#6c84ee" stroke-width="1" fill="none"/><path d="M123.6 437.0L122.0 440.5" stroke="#6c84ee" stroke-width="0.8"/><path d="M157.0 320.0L166.0 319.4" stroke="#9a9a9a" stroke-width="1.4" fill="none" stroke-dasharray="1.2 0.8"/><path d="M148.6 340.6L156.0 340.0" stroke="#9a9a9a" stroke-width="1.6" fill="none" stroke-dasharray="1.2 0.8"/><path d="M124.6 365.6L132.0 365.6" stroke="#9a9a9a" stroke-width="1.2" fill="none" stroke-dasharray="1.2 0.8"/><path d="M124.6 368.4L132.0 368.4" stroke="#9a9a9a" stroke-width="1.2" fill="none" stroke-dasharray="1.2 0.8"/></g><rect x="1033.8" y="270.6" width="183.8" height="222.6" fill="none" stroke="#2c00d6" stroke-width="1.3"/><path d="M1069.6 299.6L1200.6 304.4L1100.6 467.6L1069.6 457.0Z" stroke="#8a8a8a" stroke-width="3.2" fill="none" stroke-linejoin="miter"/><path d="M1068.4 298.4L1202.6 303.4L1101.2 469.2L1068.4 458.0Z" stroke="#00c8d0" stroke-width="1" fill="none" stroke-dasharray="5 2"/><path d="M1068.6 298.6L1202.4 303.6L1101.2 469.0L1068.6 458.0Z" stroke="#f04000" stroke-width="1.6" fill="none" stroke-dasharray="1.6 13.4"/><path d="M1070.8 301.0L1198.6 305.8" stroke="#8a4a20" stroke-width="0.8" fill="none" /><path d="M1091.2 329.6L1140.4 331.0L1143.8 337.6L1105.6 402.6L1091.2 402.4Z" stroke="#00d8d8" stroke-width="1.2" fill="none" /><rect x="1088.8" y="327.2" width="2.8" height="2.8" fill="#e04a10"/><rect x="1119.0" y="328.2" width="2.8" height="2.8" fill="#e04a10"/><rect x="1147.2" y="329.2" width="2.8" height="2.8" fill="#e04a10"/><rect x="1088.8" y="353.6" width="2.8" height="2.8" fill="#e04a10"/><rect x="1132.2" y="355.6" width="2.8" height="2.8" fill="#e04a10"/><rect x="1088.8" y="375.2" width="2.8" height="2.8" fill="#e04a10"/><rect x="1119.2" y="377.2" width="2.8" height="2.8" fill="#e04a10"/><rect x="1088.8" y="401.0" width="2.8" height="2.8" fill="#e04a10"/><rect x="1104.4" y="401.6" width="2.8" height="2.8" fill="#e04a10"/><rect x="1088.8" y="428.4" width="2.8" height="2.8" fill="#e04a10"/><path d="M1069.4 288.6L1202.6 293.4" stroke="#858585" stroke-width="1" fill="none" /><path d="M1052.8 298.6L1052.8 458.0" stroke="#858585" stroke-width="1" fill="none" /><path d="M1063.6 472.0L1097.2 482.6" stroke="#858585" stroke-width="1" fill="none" /><path d="M1211.0 309.6L1169.6 370.6" stroke="#858585" stroke-width="1" fill="none" /><path d="M1173.0 371.0L1115.0 477.4" stroke="#858585" stroke-width="1" fill="none" /><path d="M1171.0 286.4L1154.0 301.6" stroke="#858585" stroke-width="1" fill="none" /><path d="M1171.0 280.2L1203.4 280.2" stroke="#858585" stroke-width="1.2" fill="none" /><path d="M1067.4 286.6l4 4m0-4l-4 4" stroke="#5e5038" stroke-width="1.3"/><path d="M1200.6 291.4l4 4m0-4l-4 4" stroke="#5e5038" stroke-width="1.3"/><path d="M1050.8 296.8l4 4m0-4l-4 4" stroke="#5e5038" stroke-width="1.3"/><path d="M1050.8 455.8l4 4m0-4l-4 4" stroke="#5e5038" stroke-width="1.3"/><path d="M1061.8 470l4 4m0-4l-4 4" stroke="#5e5038" stroke-width="1.3"/><path d="M1095 480.6l4 4m0-4l-4 4" stroke="#5e5038" stroke-width="1.3"/><path d="M1209 307.6l4 4m0-4l-4 4" stroke="#5e5038" stroke-width="1.3"/><path d="M1168.6 368.6l4 4m0-4l-4 4" stroke="#5e5038" stroke-width="1.3"/><path d="M1113 475.4l4 4m0-4l-4 4" stroke="#5e5038" stroke-width="1.3"/><text x="1134.8" y="290.6" font-size="7.2" text-anchor="middle" font-family="Liberation Sans,sans-serif" font-weight="bold" fill="#e2e2e2" transform="rotate(2 1134.8 290.6)">1755</text><text x="1053.4" y="378.6" font-size="6.6" text-anchor="middle" font-family="Liberation Sans,sans-serif" font-weight="bold" fill="#e2e2e2" transform="rotate(-90 1053.4 378.6)">2114</text><text x="1082.6" y="477.4" font-size="6.6" text-anchor="middle" font-family="Liberation Sans,sans-serif" font-weight="bold" fill="#e2e2e2" transform="rotate(17 1082.6 477.4)">449</text><text x="1191.6" y="340" font-size="6.6" text-anchor="middle" font-family="Liberation Sans,sans-serif" font-weight="bold" fill="#e2e2e2" transform="rotate(-56 1191.6 340)">469</text><text x="1144" y="424" font-size="6.6" text-anchor="middle" font-family="Liberation Sans,sans-serif" font-weight="bold" fill="#e2e2e2" transform="rotate(-61 1144 424)">1905</text><path d="M1105.0 297.2L1149.0 298.8" stroke="#b0b0b0" stroke-width="1.3" fill="none" stroke-dasharray="2.2 0.7 1.2 0.6 3 0.8"/><path d="M1101.4 312.0L1147.6 312.0" stroke="#b0b0b0" stroke-width="1.3" fill="none" stroke-dasharray="2.2 0.7 1.2 0.6 3 0.8"/><path d="M1101.4 316.4L1143.0 316.4" stroke="#b0b0b0" stroke-width="1.3" fill="none" stroke-dasharray="2.2 0.7 1.2 0.6 3 0.8"/><path d="M1101.4 320.4L1141.0 320.4" stroke="#b0b0b0" stroke-width="1.3" fill="none" stroke-dasharray="2.2 0.7 1.2 0.6 3 0.8"/><path d="M1172.6 277.8L1202.6 277.8" stroke="#b0b0b0" stroke-width="1.5" fill="none" stroke-dasharray="2.2 0.7 1.2 0.6 3 0.8"/><path d="M1170.6 354.6L1193.6 319.0" stroke="#b0b0b0" stroke-width="1" fill="none" stroke-dasharray="2.2 0.7 1.2 0.6 3 0.8"/><path d="M1129.0 427.6L1148.6 390.0" stroke="#b0b0b0" stroke-width="1" fill="none" stroke-dasharray="2.2 0.7 1.2 0.6 3 0.8"/><path d="M869.4 96.6L967.8 99.9L987.4 122.2L960.8 161.6L901.0 265.6L869.4 254.7Z" stroke="#e23a06" stroke-width="1.1" fill="none" /><circle cx="619.1" cy="244.3" r="4.3" fill="none" stroke="#c8c8c8" stroke-width="0.9"/><text x="619.1" y="245.8" font-family="Liberation Sans,sans-serif" font-weight="bold" font-size="4.2" text-anchor="middle" fill="#e8e8e8">A1</text><circle cx="598" cy="264.7" r="4.3" fill="none" stroke="#c8c8c8" stroke-width="0.9"/><text x="598" y="266.2" font-family="Liberation Sans,sans-serif" font-weight="bold" font-size="4.2" text-anchor="middle" fill="#e8e8e8">A4</text><path d="M93.5 711.8V774.3H154.6" stroke="#e0e0e0" stroke-width="1.1" fill="none"/><rect x="88.4" y="768.6" width="11.2" height="11" fill="none" stroke="#e6e6e6" stroke-width="1.1"/><text transform="translate(102.6 707.8) scale(1.32 1)" font-family="DejaVu Sans Light,DejaVu Sans,Liberation Sans,sans-serif" font-weight="200" font-size="19.6" text-anchor="middle" fill="#d8d8d8">Y</text><text transform="translate(166.6 772.6) scale(1.3 1)" font-family="DejaVu Sans Light,DejaVu Sans,Liberation Sans,sans-serif" font-weight="200" font-size="19.6" text-anchor="middle" fill="#d8d8d8">X</text><text x="76.6" y="63.7" font-family="Liberation Sans,sans-serif" font-size="13.6" fill="#ececec" lengthAdjust="spacingAndGlyphs">[</text><text x="82.9" y="63.7" font-family="Liberation Sans,sans-serif" font-size="13.6" fill="#ececec" lengthAdjust="spacingAndGlyphs" textLength="7.2">−</text><text x="93.8" y="63.7" font-family="Liberation Sans,sans-serif" font-size="13.6" fill="#ececec" lengthAdjust="spacingAndGlyphs">]</text><text x="98.6" y="63.7" font-family="Liberation Sans,sans-serif" font-size="13.6" fill="#ececec" lengthAdjust="spacingAndGlyphs" textLength="32.8">[Top]</text><text x="131.8" y="63.7" font-family="Liberation Sans,sans-serif" font-size="13.6" fill="#ececec" lengthAdjust="spacingAndGlyphs" textLength="100.4">[2D Wireframe]</text><defs><radialGradient id="ring" cx="0.5" cy="0.5" r="0.5"><stop offset="0.76" stop-color="#323232"/><stop offset="0.9" stop-color="#3e3e3e"/><stop offset="1" stop-color="#363636"/></radialGradient></defs><circle cx="1150.2" cy="130" r="56.3" fill="none" stroke="#3a3a3a" stroke-width="14.2"/><rect x="1123.2" y="103.6" width="54" height="53.4" fill="#a6a6a6"/><rect x="1133.4" y="113.6" width="33.4" height="33.2" fill="#9b9ea7"/><text x="1150" y="135.8" font-family="Liberation Sans,sans-serif" font-weight="bold" font-size="15.4" text-anchor="middle" fill="#5b5f69" textLength="21.6" lengthAdjust="spacingAndGlyphs">TOP</text><text x="1150" y="78.8" font-family="Liberation Sans,sans-serif" font-weight="bold" font-size="22.6" text-anchor="middle" fill="#bcbcbc">N</text><text x="1150" y="197.8" font-family="Liberation Sans,sans-serif" font-weight="bold" font-size="22.6" text-anchor="middle" fill="#bcbcbc">S</text><text x="1090.6" y="138" font-family="Liberation Sans,sans-serif" font-weight="bold" font-size="22.6" text-anchor="middle" fill="#bcbcbc">W</text><text x="1209.6" y="138" font-family="Liberation Sans,sans-serif" font-weight="bold" font-size="22.6" text-anchor="middle" fill="#bcbcbc">E</text><rect x="1121.4" y="223.2" width="56.4" height="19.4" rx="4" fill="#8b8b94" stroke="#6a6a72" stroke-width="0.8"/><text x="1127" y="237.6" font-family="Liberation Sans,sans-serif" font-size="15" fill="#5a5a62" textLength="29" lengthAdjust="spacingAndGlyphs">WCS</text><path d="M1163.6 230.4h8.6l-4.3 4.6z" fill="#a2a2ac"/></svg>
</div>
<div class="abs" style="left:4px;top:799px;width:29px;height:68px;background:linear-gradient(#6e6e6e,#3a3a3a)"></div>
<div class="abs" style="left:33px;top:799px;width:1242px;height:42px;background:#c8c8c8"></div>
<div class="abs" style="left:33px;top:840px;width:1242px;height:1px;background:#8a8a8a"></div>
<div class="abs" style="left:33px;top:841px;width:1242px;height:26px;background:#fff;border-radius:0 0 3px 0"></div>
<div class="abs mono" style="left:36px;top:802px;font-size:14.7px;line-height:19px;color:#000;white-space:pre">Command:
Command:</div>
<div class="abs mono" style="left:78px;top:845.5px;font-size:14.8px;line-height:19px;color:#9a9a9a;font-style:italic;white-space:pre">Type a command</div>
<svg style="left:4px;top:799px" width="30" height="68" viewBox="4 799 30 68"><rect x="8" y="804" width="2" height="2" fill="#8f8f8f"/><rect x="8" y="808" width="2" height="2" fill="#8f8f8f"/><rect x="11" y="804" width="2" height="2" fill="#8f8f8f"/><rect x="11" y="808" width="2" height="2" fill="#8f8f8f"/><rect x="14" y="804" width="2" height="2" fill="#8f8f8f"/><rect x="14" y="808" width="2" height="2" fill="#8f8f8f"/><rect x="17" y="804" width="2" height="2" fill="#8f8f8f"/><rect x="17" y="808" width="2" height="2" fill="#8f8f8f"/><rect x="20" y="804" width="2" height="2" fill="#8f8f8f"/><rect x="20" y="808" width="2" height="2" fill="#8f8f8f"/><rect x="23" y="804" width="2" height="2" fill="#8f8f8f"/><rect x="23" y="808" width="2" height="2" fill="#8f8f8f"/><rect x="26" y="804" width="2" height="2" fill="#8f8f8f"/><rect x="26" y="808" width="2" height="2" fill="#8f8f8f"/><path d="M13.5 821.5l9 9m0-9l-9 9" stroke="#fff" stroke-width="2.2" fill="none"/><path d="M15.2 846.2a4.6 4.6 0 0 0-3.6 7.2a4.6 4.6 0 0 0 5.2 1.4l6.6 6.4a1.6 1.6 0 0 0 2.4-2.2l-6.4-6.6a4.6 4.6 0 0 0-0.6-4.6l-2.4 2.6l-2.4-0.6l-0.4-2.2z" fill="#e8e8e8"/></svg>
<div class="abs" style="left:39px;top:845px;width:19px;height:18px;background:#d6dae2;border:1px solid #a9afbb;border-radius:3px"></div>
<svg style="left:39px;top:845px" width="40" height="18" viewBox="39 845 40 18"><path d="M43 850l5 4l-5 4" stroke="#4a5060" stroke-width="1.6" fill="none"/><path d="M49.5 859.5h4.5" stroke="#4a5060" stroke-width="1.6"/><path d="M61.5 853h7l-3.5 4z" fill="#7a7a7a"/></svg>
<div class="abs" style="left:4px;top:867px;width:1272px;height:37px;background:#3b3b3b"></div>
<div class="abs" style="left:4px;top:904px;width:1272px;height:3px;background:#b4b4b4"></div>
<div class="abs" style="left:4px;top:904px;width:34px;height:3px;background:#d8d8d8"></div>
<div class="abs" style="left:38px;top:904px;width:2px;height:3px;background:#7a7a7a"></div>
<svg style="left:0;top:867px" width="300" height="30" viewBox="0 867 300 30"><defs><linearGradient id="tg" x1="0" y1="0" x2="0" y2="1"><stop offset="0" stop-color="#4c4c4c"/><stop offset="1" stop-color="#747474"/></linearGradient><linearGradient id="tg2" x1="0" y1="0" x2="0" y2="1"><stop offset="0" stop-color="#444"/><stop offset="1" stop-color="#616161"/></linearGradient></defs><path d="M10 867C18 868 19 872 21 878C23 887 25 890.6 31 890.6H81C87 890.6 88 887 90 878C92 872 93 868 100 867Z" fill="url(#tg)"/><path d="M88 867C93 869 94 872 96 878C98 887 99 890.6 105 890.6H158C164 890.6 165 887 167 878C169 872 170 868 177 867Z" fill="url(#tg2)"/><path d="M168 867C173 869 174 872 176 878C178 887 179 890.6 185 890.6H240C246 890.6 247 887 249 878C251 872 252 868 259 867Z" fill="url(#tg2)"/><path d="M263 871.6Q278 869.6 285.4 870.6Q284.4 887 279 890.4H257.4Q255.6 880 263 871.6Z" fill="#535353"/><path d="M266 880.5h9M270.5 876v9" stroke="#d0d0d0" stroke-width="2"/></svg>
<div class="abs" style="left:34px;top:869px;font-size:14.4px;font-weight:bold;color:#fff;line-height:18px">Model</div>
<div class="abs" style="left:105px;top:869px;font-size:14.3px;color:#c4c4c4;line-height:18px">Layout1</div>
<div class="abs" style="left:186px;top:869px;font-size:14.3px;color:#c4c4c4;line-height:18px">Layout2</div>
<div class="abs" style="left:474px;top:867px;width:801px;height:34.5px;background:#505050"></div>
<svg style="left:470px;top:864px" width="810" height="43" viewBox="470 864 810 43"><defs><filter id="glow" x="-30%" y="-30%" width="160%" height="160%"><feGaussianBlur stdDeviation="1.1" result="b"/><feMerge><feMergeNode in="b"/><feMergeNode in="SourceGraphic"/></feMerge></filter></defs><rect x="475.5" y="869.5" width="60.0" height="31" fill="#4f4f4f" stroke="#767676" stroke-width="1"/><rect x="537.5" y="869.5" width="80.0" height="31" fill="#4f4f4f" stroke="#767676" stroke-width="1"/><rect x="619.5" y="869.5" width="128.5" height="31" fill="#4f4f4f" stroke="#767676" stroke-width="1"/><rect x="749" y="869.5" width="79.5" height="31" fill="#4f4f4f" stroke="#767676" stroke-width="1"/><rect x="829.5" y="869.5" width="30.0" height="31" fill="#4f4f4f" stroke="#767676" stroke-width="1"/><rect x="861.5" y="869.5" width="136.0" height="31" fill="#4f4f4f" stroke="#767676" stroke-width="1"/><rect x="999.5" y="869.5" width="49.5" height="31" fill="#4f4f4f" stroke="#767676" stroke-width="1"/><rect x="1050.5" y="869.5" width="30.0" height="31" fill="#4f4f4f" stroke="#767676" stroke-width="1"/><rect x="1082.5" y="869.5" width="31.0" height="31" fill="#4f4f4f" stroke="#767676" stroke-width="1"/><rect x="1115.5" y="869.5" width="31.0" height="31" fill="#4f4f4f" stroke="#767676" stroke-width="1"/><rect x="1148.5" y="869.5" width="63.0" height="31" fill="#4f4f4f" stroke="#767676" stroke-width="1"/><rect x="1213.5" y="869.5" width="61.0" height="31" fill="#4f4f4f" stroke="#767676" stroke-width="1"/><text x="481" y="890.7" font-family="Liberation Sans,sans-serif" font-size="15.2" fill="#fff" textLength="49.6" lengthAdjust="spacingAndGlyphs">MODEL</text><path d="M545.4 874.8V892.6" stroke="#c4c4c4" stroke-width="1.5"/><path d="M548.7 874.8V892.6" stroke="#c4c4c4" stroke-width="1.5"/><path d="M552.0 874.8V892.6" stroke="#c4c4c4" stroke-width="1.5"/><path d="M555.3 874.8V892.6" stroke="#c4c4c4" stroke-width="1.5"/><path d="M558.6 874.8V892.6" stroke="#c4c4c4" stroke-width="1.5"/><path d="M543.6 877.6H561" stroke="#b0b0b0" stroke-width="0.9" stroke-dasharray="1.4 1.9"/><path d="M543.6 880.8H561" stroke="#b0b0b0" stroke-width="0.9" stroke-dasharray="1.4 1.9"/><path d="M543.6 884.0H561" stroke="#b0b0b0" stroke-width="0.9" stroke-dasharray="1.4 1.9"/><path d="M543.6 887.2H561" stroke="#b0b0b0" stroke-width="0.9" stroke-dasharray="1.4 1.9"/><path d="M543.6 890.4H561" stroke="#b0b0b0" stroke-width="0.9" stroke-dasharray="1.4 1.9"/><rect x="574.4" y="876.4" width="1.4" height="1.4" fill="#9c9c9c"/><rect x="574.4" y="880.2" width="1.4" height="1.4" fill="#9c9c9c"/><rect x="574.4" y="884.0" width="1.4" height="1.4" fill="#9c9c9c"/><rect x="574.4" y="887.8" width="1.4" height="1.4" fill="#9c9c9c"/><rect x="574.4" y="891.6" width="1.4" height="1.4" fill="#9c9c9c"/><rect x="578.2" y="876.4" width="1.4" height="1.4" fill="#9c9c9c"/><rect x="578.2" y="880.2" width="1.4" height="1.4" fill="#9c9c9c"/><rect x="578.2" y="884.0" width="1.4" height="1.4" fill="#9c9c9c"/><rect x="578.2" y="887.8" width="1.4" height="1.4" fill="#9c9c9c"/><rect x="578.2" y="891.6" width="1.4" height="1.4" fill="#9c9c9c"/><rect x="582.0" y="876.4" width="1.4" height="1.4" fill="#9c9c9c"/><rect x="582.0" y="880.2" width="1.4" height="1.4" fill="#9c9c9c"/><rect x="582.0" y="884.0" width="1.4" height="1.4" fill="#9c9c9c"/><rect x="582.0" y="887.8" width="1.4" height="1.4" fill="#9c9c9c"/><rect x="582.0" y="891.6" width="1.4" height="1.4" fill="#9c9c9c"/><rect x="585.8" y="876.4" width="1.4" height="1.4" fill="#9c9c9c"/><rect x="585.8" y="880.2" width="1.4" height="1.4" fill="#9c9c9c"/><rect x="585.8" y="884.0" width="1.4" height="1.4" fill="#9c9c9c"/><rect x="585.8" y="887.8" width="1.4" height="1.4" fill="#9c9c9c"/><rect x="585.8" y="891.6" width="1.4" height="1.4" fill="#9c9c9c"/><rect x="589.6" y="876.4" width="1.4" height="1.4" fill="#9c9c9c"/><rect x="589.6" y="880.2" width="1.4" height="1.4" fill="#9c9c9c"/><rect x="589.6" y="884.0" width="1.4" height="1.4" fill="#9c9c9c"/><rect x="589.6" y="887.8" width="1.4" height="1.4" fill="#9c9c9c"/><rect x="589.6" y="891.6" width="1.4" height="1.4" fill="#9c9c9c"/><path d="M602.8000000000001 882h8.8l-4.4 5z" fill="#fff"/><path d="M627.5 878V891.4H643.6" stroke="#b4b4b4" stroke-width="1.5" fill="none"/><path d="M627.5 887.4H632.6V891.4" stroke="#b4b4b4" stroke-width="1" fill="none"/><circle cx="664.4" cy="884.8" r="7" stroke="#b4b4b4" stroke-width="1.5" fill="none"/><path d="M664.4 884.8H675.4M664.4 884.8L670.8 877.2" stroke="#b4b4b4" stroke-width="1.3" fill="none"/><path d="M685.0 882h8.8l-4.4 5z" fill="#fff"/><path d="M714.5 873V896M704.6 874.2L724.6 894.4" stroke="#8e8e8e" stroke-width="1.5"/><path d="M734.1 882h8.8l-4.4 5z" fill="#fff"/><g filter="url(#glow)"><path d="M769.9 878L754.8 892.9H774.4" stroke="#2f8af5" stroke-width="1.8" fill="none" stroke-linejoin="round"/><rect x="760" y="883.8" width="3" height="3" fill="#2f8af5"/></g><g filter="url(#glow)"><rect x="787.2" y="877.4" width="16" height="16" fill="none" stroke="#2f8af5" stroke-width="1.7"/></g><rect x="786.6" y="876.8" width="5" height="5" fill="#0a1a0a"/><circle cx="789.1" cy="879.3" r="1.8" fill="#1fe01f"/><path d="M814.1 882h8.8l-4.4 5z" fill="#fff"/><path d="M834 877.5H854.2" stroke="#d4d4d4" stroke-width="2"/><path d="M834 881.2H854.2M834 887.8H854.2" stroke="#bdbdbd" stroke-width="1"/><path d="M834 883.6H845" stroke="#c8c8c8" stroke-width="2.6"/><path d="M834 890.6H845" stroke="#c8c8c8" stroke-width="3"/><g filter="url(#glow)"><path d="M876.4 873Q878.1999999999999 882 886.4 893.8Q880.4 892.4 876.4 888.4Q872.4 892.4 866.4 893.8Q874.6 882 876.4 873Z" fill="#2f8af5"/><circle cx="881.8" cy="879.6" r="3.2" fill="#4f4f4f" stroke="#2f8af5" stroke-width="1.5"/></g><path d="M906.8 873Q908.5999999999999 882 916.8 893.8Q910.8 892.4 906.8 888.4Q902.8 892.4 896.8 893.8Q905.0 882 906.8 873Z" fill="#bcbcbc"/><path d="M912.6 873.6L907.6 880H910.6L908 886.4" stroke="#4f4f4f" stroke-width="2.6" fill="none"/><path d="M912.6 873.6L908.6 879.6H911.2L908.6 885.4" stroke="#c8c8c8" stroke-width="1.1" fill="none"/><path d="M937.1 873Q938.9 882 947.1 893.8Q941.1 892.4 937.1 888.4Q933.1 892.4 927.1 893.8Q935.3000000000001 882 937.1 873Z" fill="#bcbcbc"/><text x="958" y="890.7" font-family="Liberation Sans,sans-serif" font-size="15.2" fill="#fff" textLength="19.6" lengthAdjust="spacingAndGlyphs">1:1</text><path d="M982.9 882h8.8l-4.4 5z" fill="#fff"/><polygon points="1022.56,884.26 1022.56,885.74 1020.36,886.63 1019.94,887.64 1020.87,889.82 1019.82,890.87 1017.64,889.94 1016.63,890.36 1015.74,892.56 1014.26,892.56 1013.37,890.36 1012.36,889.94 1010.18,890.87 1009.13,889.82 1010.06,887.64 1009.64,886.63 1007.44,885.74 1007.44,884.26 1009.64,883.37 1010.06,882.36 1009.13,880.18 1010.18,879.13 1012.36,880.06 1013.37,879.64 1014.26,877.44 1015.74,877.44 1016.63,879.64 1017.64,880.06 1019.82,879.13 1020.87,880.18 1019.94,882.36 1020.36,883.37" fill="#b8b8b8"/><circle cx="1015" cy="885" r="2.6" fill="#4f4f4f"/><path d="M1035.1 882h8.8l-4.4 5z" fill="#fff"/><path d="M1055.8 885.2H1073.8M1064.8 876.2V894.2" stroke="#d6d6d6" stroke-width="2.2"/><rect x="1088.8" y="875.8" width="7.4" height="7.2" fill="none" stroke="#c2c2c2" stroke-width="1.3"/><circle cx="1102.6" cy="882.8" r="4" fill="none" stroke="#c2c2c2" stroke-width="1.3"/><path d="M1095.6 886.6L1099.6 892.8H1091.6Z" fill="none" stroke="#c2c2c2" stroke-width="1.3"/><g filter="url(#glow)"><circle cx="1130.9" cy="884.8" r="9" fill="#1858c4" stroke="#2f8af5" stroke-width="1.6"/></g><path d="M1130.9 888.4L1136.2 884.6" stroke="#7ab4ff" stroke-width="1.5" stroke-linecap="round"/><path d="M1153.4 875.8H1163.4L1166.8 879.4V891.8H1153.4Z" fill="#3d78c8"/><path d="M1163.4 875.8V879.4H1166.8Z" fill="#d8e4f4"/><rect x="1153.4" y="884.6" width="11" height="7.2" fill="#f0c428"/><circle cx="1156.8" cy="879.6" r="2.2" fill="#e8eef8" stroke="#fff" stroke-width="0.6"/><path d="M1156.8 875.8V886M1153.4 879.6H1161" stroke="#f4f4f8" stroke-width="0.8"/><path d="M1167.4 883.4L1173.2 893.6H1161.6Z" fill="#ffd21c" stroke="#e8540c" stroke-width="1.2" stroke-linejoin="round"/><path d="M1167.4 886.4V890" stroke="#222" stroke-width="1.3"/><circle cx="1167.4" cy="891.6" r="0.8" fill="#222"/><rect x="1180.6" y="876" width="22" height="17.4" fill="#f4f4f4" stroke="#101010" stroke-width="1.2"/><path d="M1182.4 892Q1185.4 889 1187.4 882.6Q1189 878.4 1191.6 879.2Q1193.6 880 1195 884Q1197 890 1200.6 892" stroke="#333" stroke-width="1.2" fill="none"/><circle cx="1188.6" cy="879.8" r="1" fill="#222"/><path d="M1200.2 886.4L1205.2 895.6H1195.2Z" fill="#e8642c" stroke="#c84a14" stroke-width="0.8" stroke-linejoin="round"/><path d="M1200.2 889.4V892.6" stroke="#fff" stroke-width="1.2"/><circle cx="1200.2" cy="894" r="0.7" fill="#fff"/><rect x="1220" y="878.2" width="18.6" height="13.6" rx="1" fill="none" stroke="#c4c4c4" stroke-width="1.3"/><path d="M1223.4 889L1227.4 885M1223 885.6V889.4H1226.8M1235 881L1231 885M1231.6 880.6H1235.4V884.4" stroke="#c4c4c4" stroke-width="1.5" fill="none"/><path d="M1249.8 878.8H1269.2M1249.8 885.2H1269.2M1249.8 891.4H1269.2" stroke="#d2d2d2" stroke-width="2.3"/></svg>
</div></body></html>
